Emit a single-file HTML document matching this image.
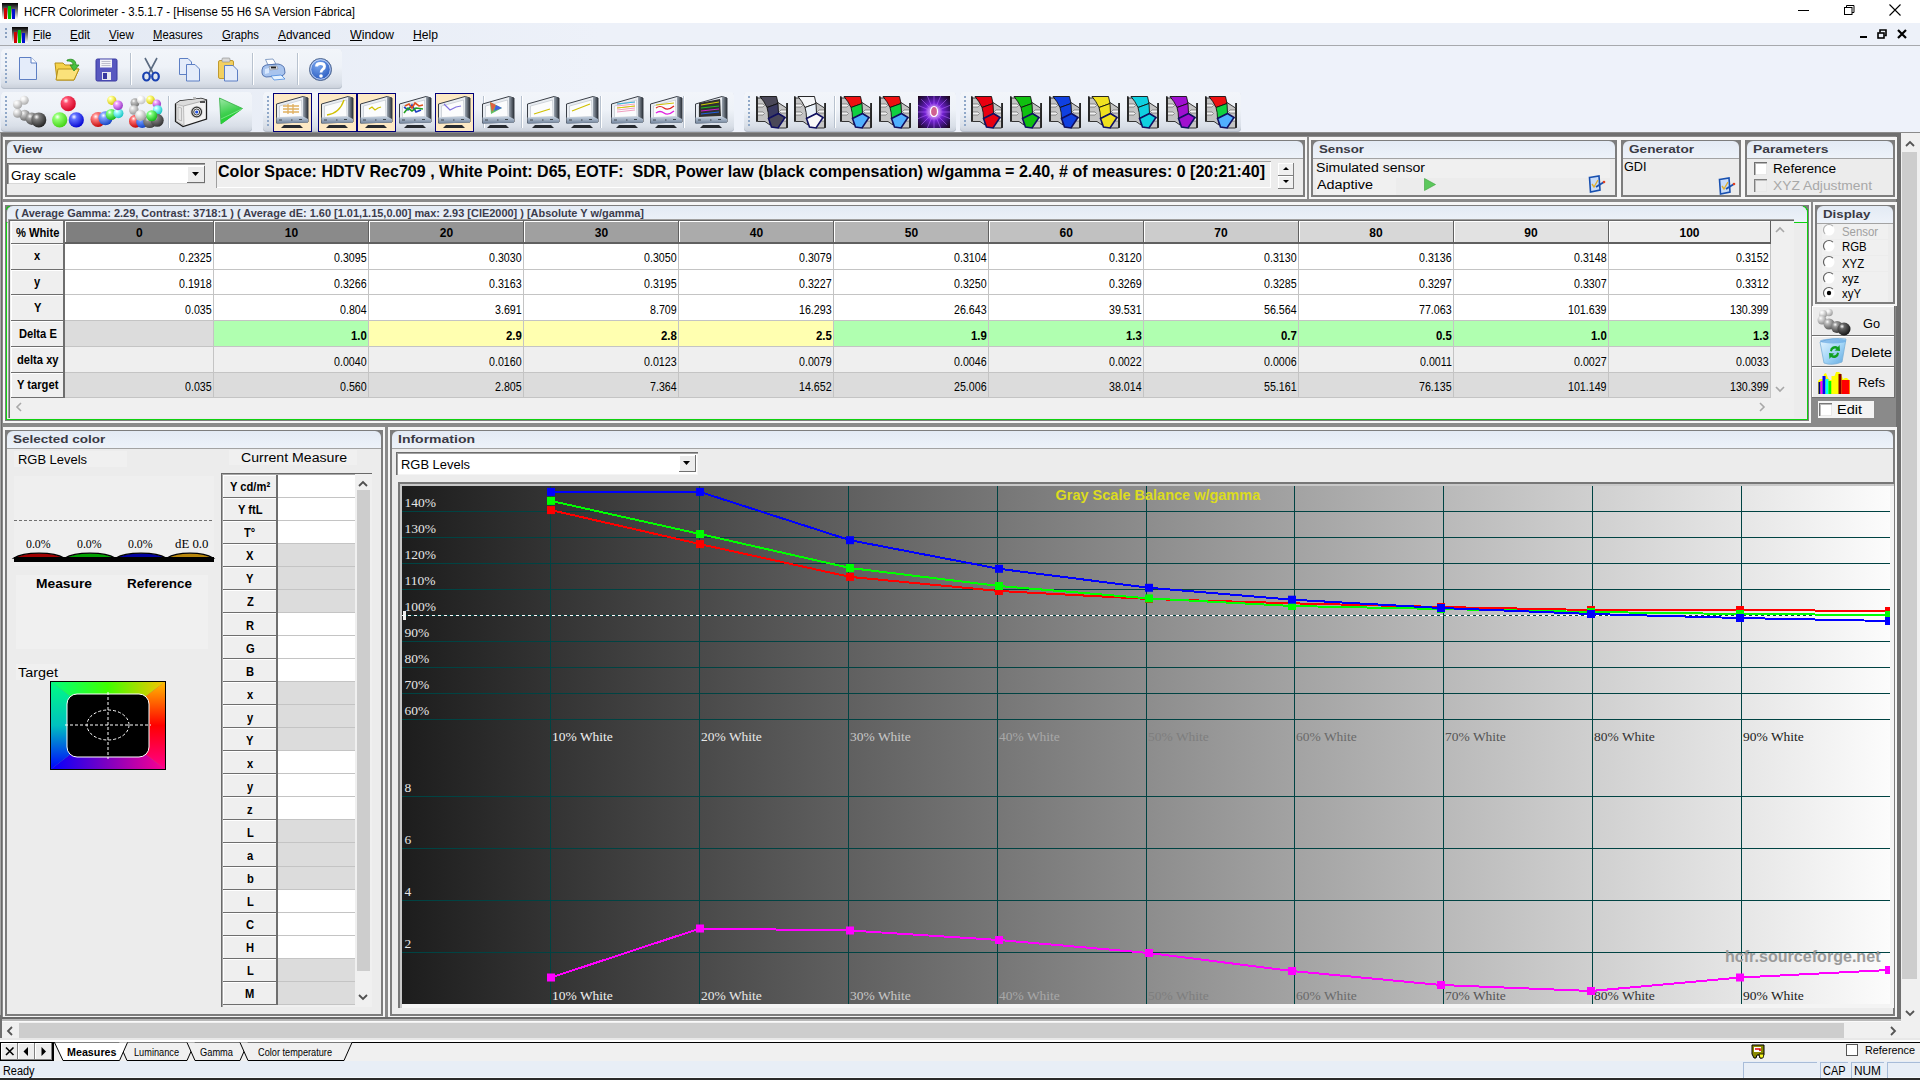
<!DOCTYPE html>
<html><head><meta charset="utf-8"><title>HCFR Colorimeter</title>
<style>
html,body{margin:0;padding:0;width:1920px;height:1080px;overflow:hidden;background:#f0f0f0;position:relative}
.b{position:absolute;box-sizing:border-box}
.t{position:absolute;white-space:pre;margin:0;padding:0}
svg.b{overflow:visible}
</style></head><body>
<div class="b" style="left:0px;top:0px;width:1920px;height:23px;background:#fff"></div><svg class="b" style="left:2px;top:3px" width="16" height="16" viewBox="0 0 16 16">
<defs><linearGradient id="ib" x1="0" y1="0" x2="0" y2="1"><stop offset="0" stop-color="#000"/><stop offset="1" stop-color="#fff"/></linearGradient></defs>
<rect x="0" y="0" width="16" height="16" fill="url(#ib)"/>
<rect x="2" y="5" width="3" height="11" fill="#d00000"/><rect x="6" y="3" width="3" height="13" fill="#00c000"/><rect x="10" y="6" width="3" height="10" fill="#0010d0"/></svg><div class="t" style="left:23.50px;top:5.84px;font-size:12px;line-height:12px;font-family:'Liberation Sans', sans-serif;font-weight:normal;color:#000;transform:scaleX(0.9526);transform-origin:0 0;">HCFR Colorimeter - 3.5.1.7 - [Hisense 55 H6 SA Version Fábrica]</div><div class="b" style="left:1798px;top:10px;width:11px;height:1px;background:#000"></div><svg class="b" style="left:1844px;top:5px" width="11" height="10"><rect x="0.5" y="2.5" width="7.5" height="7" fill="none" stroke="#000"/><path d="M2.5 2.5 V0.5 H10 V7.5 H8" fill="none" stroke="#000"/></svg><svg class="b" style="left:1889px;top:4px" width="12" height="12"><path d="M0.5 0.5 L11.5 11.5 M11.5 0.5 L0.5 11.5" stroke="#000" stroke-width="1.1"/></svg><div class="b" style="left:0px;top:23px;width:1920px;height:22px;background:linear-gradient(90deg,#e3e9f3 0px,#edf1f9 600px,#edf1f9 1920px)"></div><div class="b" style="left:0px;top:45px;width:1920px;height:1px;background:#a7a9ad"></div><div class="b" style="left:5px;top:28px;width:2px;height:2px;background:#8aa0c0"></div><div class="b" style="left:5px;top:32px;width:2px;height:2px;background:#8aa0c0"></div><div class="b" style="left:5px;top:36px;width:2px;height:2px;background:#8aa0c0"></div><svg class="b" style="left:12px;top:27px" width="16" height="16" viewBox="0 0 16 16">
<rect x="0" y="0" width="16" height="16" fill="url(#ib)"/>
<rect x="2" y="5" width="3" height="11" fill="#d00000"/><rect x="6" y="3" width="3" height="13" fill="#00c000"/><rect x="10" y="6" width="3" height="10" fill="#0010d0"/></svg><div class="t" style="left:33.00px;top:28.84px;font-size:12px;line-height:12px;font-family:'Liberation Sans', sans-serif;font-weight:normal;color:#000;transform:scaleX(0.9567);transform-origin:0 0;">File</div><div class="b" style="left:33px;top:40px;width:7px;height:1px;background:#000"></div><div class="t" style="left:70.00px;top:28.84px;font-size:12px;line-height:12px;font-family:'Liberation Sans', sans-serif;font-weight:normal;color:#000;transform:scaleX(0.9672);transform-origin:0 0;">Edit</div><div class="b" style="left:70px;top:40px;width:8px;height:1px;background:#000"></div><div class="t" style="left:109.00px;top:28.84px;font-size:12px;line-height:12px;font-family:'Liberation Sans', sans-serif;font-weight:normal;color:#000;transform:scaleX(0.9614);transform-origin:0 0;">View</div><div class="b" style="left:109px;top:40px;width:8px;height:1px;background:#000"></div><div class="t" style="left:153.40px;top:28.84px;font-size:12px;line-height:12px;font-family:'Liberation Sans', sans-serif;font-weight:normal;color:#000;transform:scaleX(0.9414);transform-origin:0 0;">Measures</div><div class="b" style="left:153.4px;top:40px;width:9px;height:1px;background:#000"></div><div class="t" style="left:222.00px;top:28.84px;font-size:12px;line-height:12px;font-family:'Liberation Sans', sans-serif;font-weight:normal;color:#000;transform:scaleX(0.9402);transform-origin:0 0;">Graphs</div><div class="b" style="left:222px;top:40px;width:9px;height:1px;background:#000"></div><div class="t" style="left:278.00px;top:28.84px;font-size:12px;line-height:12px;font-family:'Liberation Sans', sans-serif;font-weight:normal;color:#000;transform:scaleX(0.9855);transform-origin:0 0;">Advanced</div><div class="b" style="left:278px;top:40px;width:8px;height:1px;background:#000"></div><div class="t" style="left:350.00px;top:28.84px;font-size:12px;line-height:12px;font-family:'Liberation Sans', sans-serif;font-weight:normal;color:#000;transform:scaleX(1.0309);transform-origin:0 0;">Window</div><div class="b" style="left:350px;top:40px;width:12px;height:1px;background:#000"></div><div class="t" style="left:413.00px;top:28.84px;font-size:12px;line-height:12px;font-family:'Liberation Sans', sans-serif;font-weight:normal;color:#000;transform:scaleX(1.0129);transform-origin:0 0;">Help</div><div class="b" style="left:413px;top:40px;width:9px;height:1px;background:#000"></div><div class="b" style="left:1860px;top:36px;width:7px;height:2px;background:#000"></div><svg class="b" style="left:1877px;top:29px" width="10" height="10"><rect x="1" y="4" width="6" height="5" fill="none" stroke="#000" stroke-width="1.6"/><path d="M3 3.5 V1 H9 V6.5 H7.5" fill="none" stroke="#000" stroke-width="1.6"/></svg><svg class="b" style="left:1897px;top:29px" width="10" height="10"><path d="M1 1 L9 9 M9 1 L1 9" stroke="#000" stroke-width="2.2"/></svg><div class="b" style="left:0px;top:46px;width:1920px;height:87px;background:linear-gradient(90deg,#e6ebf4 0px,#eef2fa 600px,#eef2fa 1920px)"></div><div class="b" style="left:1px;top:49px;width:341px;height:40px;background:linear-gradient(#f2f5fa 0%,#eef2f8 45%,#d9dfe8 85%,#c8ced8 100%);border-radius:4px;box-shadow:inset 0 -1px 0 #b4bcc8;"></div><div class="b" style="left:1px;top:92px;width:251px;height:40px;background:linear-gradient(#f2f5fa 0%,#eef2f8 45%,#d9dfe8 85%,#c8ced8 100%);border-radius:4px;box-shadow:inset 0 -1px 0 #b4bcc8;"></div><div class="b" style="left:263px;top:92px;width:471px;height:40px;background:linear-gradient(#f2f5fa 0%,#eef2f8 45%,#d9dfe8 85%,#c8ced8 100%);border-radius:4px;box-shadow:inset 0 -1px 0 #b4bcc8;"></div><div class="b" style="left:744px;top:92px;width:212px;height:40px;background:linear-gradient(#f2f5fa 0%,#eef2f8 45%,#d9dfe8 85%,#c8ced8 100%);border-radius:4px;box-shadow:inset 0 -1px 0 #b4bcc8;"></div><div class="b" style="left:960px;top:92px;width:281px;height:40px;background:linear-gradient(#f2f5fa 0%,#eef2f8 45%,#d9dfe8 85%,#c8ced8 100%);border-radius:4px;box-shadow:inset 0 -1px 0 #b4bcc8;"></div><div class="b" style="left:5px;top:53px;width:2px;height:2px;background:#90a8c8"></div><div class="b" style="left:5px;top:57px;width:2px;height:2px;background:#90a8c8"></div><div class="b" style="left:5px;top:61px;width:2px;height:2px;background:#90a8c8"></div><div class="b" style="left:5px;top:65px;width:2px;height:2px;background:#90a8c8"></div><div class="b" style="left:5px;top:69px;width:2px;height:2px;background:#90a8c8"></div><div class="b" style="left:5px;top:73px;width:2px;height:2px;background:#90a8c8"></div><div class="b" style="left:5px;top:77px;width:2px;height:2px;background:#90a8c8"></div><div class="b" style="left:5px;top:81px;width:2px;height:2px;background:#90a8c8"></div><div class="b" style="left:5px;top:96px;width:2px;height:2px;background:#90a8c8"></div><div class="b" style="left:5px;top:100px;width:2px;height:2px;background:#90a8c8"></div><div class="b" style="left:5px;top:104px;width:2px;height:2px;background:#90a8c8"></div><div class="b" style="left:5px;top:108px;width:2px;height:2px;background:#90a8c8"></div><div class="b" style="left:5px;top:112px;width:2px;height:2px;background:#90a8c8"></div><div class="b" style="left:5px;top:116px;width:2px;height:2px;background:#90a8c8"></div><div class="b" style="left:5px;top:120px;width:2px;height:2px;background:#90a8c8"></div><div class="b" style="left:5px;top:124px;width:2px;height:2px;background:#90a8c8"></div><div class="b" style="left:267px;top:96px;width:2px;height:2px;background:#90a8c8"></div><div class="b" style="left:267px;top:100px;width:2px;height:2px;background:#90a8c8"></div><div class="b" style="left:267px;top:104px;width:2px;height:2px;background:#90a8c8"></div><div class="b" style="left:267px;top:108px;width:2px;height:2px;background:#90a8c8"></div><div class="b" style="left:267px;top:112px;width:2px;height:2px;background:#90a8c8"></div><div class="b" style="left:267px;top:116px;width:2px;height:2px;background:#90a8c8"></div><div class="b" style="left:267px;top:120px;width:2px;height:2px;background:#90a8c8"></div><div class="b" style="left:267px;top:124px;width:2px;height:2px;background:#90a8c8"></div><div class="b" style="left:748px;top:96px;width:2px;height:2px;background:#90a8c8"></div><div class="b" style="left:748px;top:100px;width:2px;height:2px;background:#90a8c8"></div><div class="b" style="left:748px;top:104px;width:2px;height:2px;background:#90a8c8"></div><div class="b" style="left:748px;top:108px;width:2px;height:2px;background:#90a8c8"></div><div class="b" style="left:748px;top:112px;width:2px;height:2px;background:#90a8c8"></div><div class="b" style="left:748px;top:116px;width:2px;height:2px;background:#90a8c8"></div><div class="b" style="left:748px;top:120px;width:2px;height:2px;background:#90a8c8"></div><div class="b" style="left:748px;top:124px;width:2px;height:2px;background:#90a8c8"></div><div class="b" style="left:964px;top:96px;width:2px;height:2px;background:#90a8c8"></div><div class="b" style="left:964px;top:100px;width:2px;height:2px;background:#90a8c8"></div><div class="b" style="left:964px;top:104px;width:2px;height:2px;background:#90a8c8"></div><div class="b" style="left:964px;top:108px;width:2px;height:2px;background:#90a8c8"></div><div class="b" style="left:964px;top:112px;width:2px;height:2px;background:#90a8c8"></div><div class="b" style="left:964px;top:116px;width:2px;height:2px;background:#90a8c8"></div><div class="b" style="left:964px;top:120px;width:2px;height:2px;background:#90a8c8"></div><div class="b" style="left:964px;top:124px;width:2px;height:2px;background:#90a8c8"></div><div class="b" style="left:130px;top:53px;width:1px;height:32px;background:#b8c2cf;box-shadow:1px 0 0 #fff"></div><div class="b" style="left:252px;top:53px;width:1px;height:32px;background:#b8c2cf;box-shadow:1px 0 0 #fff"></div><div class="b" style="left:297px;top:53px;width:1px;height:32px;background:#b8c2cf;box-shadow:1px 0 0 #fff"></div><div class="b" style="left:168px;top:96px;width:1px;height:32px;background:#b8c2cf;box-shadow:1px 0 0 #fff"></div><div class="b" style="left:483px;top:96px;width:1px;height:32px;background:#b8c2cf;box-shadow:1px 0 0 #fff"></div><div class="b" style="left:521px;top:96px;width:1px;height:32px;background:#b8c2cf;box-shadow:1px 0 0 #fff"></div><div class="b" style="left:600px;top:96px;width:1px;height:32px;background:#b8c2cf;box-shadow:1px 0 0 #fff"></div><div class="b" style="left:683px;top:96px;width:1px;height:32px;background:#b8c2cf;box-shadow:1px 0 0 #fff"></div><div class="b" style="left:834px;top:96px;width:1px;height:32px;background:#b8c2cf;box-shadow:1px 0 0 #fff"></div><div class="b" style="left:0px;top:132px;width:1920px;height:4px;background:#8b8b8b"></div><svg class="b" style="left:18px;top:56px" width="20" height="25" viewBox="0 0 20 25"><path d="M1.5 1.5 H13 L18.5 7 V23.5 H1.5Z" fill="#e4ecfa" stroke="#5d7fc4"/><path d="M13 1.5 V7 H18.5" fill="#fff" stroke="#5d7fc4"/></svg><svg class="b" style="left:54px;top:57px" width="26" height="25" viewBox="0 0 26 25"><path d="M1 6 H9 L11 8 H19 L21 12 L25 12 L20 23 H3 Z" fill="#f5d24a" stroke="#b69018"/><path d="M4 12 H25 L20 23 H2Z" fill="#fbe27a" stroke="#b69018"/><path d="M13 3 C18 1 22 3 22 8 L25 8 L20 14 L16 8 L19 8 C19 5 17 4 13 4Z" fill="#48c040" stroke="#2a8a25" stroke-width="0.8"/></svg><svg class="b" style="left:95px;top:58px" width="23" height="24" viewBox="0 0 23 24"><rect x="1" y="1" width="21" height="22" rx="1.5" fill="#5858c0" stroke="#3838a0"/><rect x="5" y="1.5" width="12" height="8" fill="#f4f4f8"/><path d="M6.5 3.5h9M6.5 5.5h9M6.5 7.5h9" stroke="#9a9ab0" stroke-width="0.6"/><rect x="7" y="14" width="9" height="8" fill="#e8e8f0"/><rect x="8" y="15" width="4" height="6" fill="#3838a0"/></svg><svg class="b" style="left:142px;top:57px" width="18" height="25" viewBox="0 0 18 25"><path d="M3 1 L11 16 M15 1 L7 16" stroke="#5a6a80" stroke-width="1.6"/><ellipse cx="4.5" cy="19.5" rx="3.3" ry="4" fill="none" stroke="#1840b0" stroke-width="2.2"/><ellipse cx="13.5" cy="19.5" rx="3.3" ry="4" fill="none" stroke="#1840b0" stroke-width="2.2"/></svg><svg class="b" style="left:178px;top:57px" width="23" height="25" viewBox="0 0 23 25"><path d="M1.5 1.5H10L13.5 5V17.5H1.5Z" fill="#e4ecfa" stroke="#5d7fc4"/><path d="M8.5 7.5H17L21.5 12V24H8.5Z" fill="#e4ecfa" stroke="#5d7fc4"/></svg><svg class="b" style="left:217px;top:57px" width="22" height="25" viewBox="0 0 22 25"><rect x="1.5" y="3.5" width="15" height="18" rx="1.5" fill="#f2d060" stroke="#c09a30"/><rect x="5" y="1" width="8" height="4" rx="1" fill="#d8d8d8" stroke="#888" stroke-width="0.6"/><path d="M7.5 8.5H16L20.5 13V24H7.5Z" fill="#e4ecfa" stroke="#5d7fc4"/></svg><svg class="b" style="left:261px;top:58px" width="25" height="23" viewBox="0 0 25 23"><path d="M4.5 1.5 L12 1 L15 6 L7 7Z" fill="#fff" stroke="#6a88b8" stroke-width="0.8"/><path d="M1 12 Q1 8 5 7 L17 6 Q23 7 23.5 11 L24 15 Q23 18 19 18 L5 19 Q1 18 1 15Z" fill="#a8c4ee" stroke="#4a6aa8" stroke-width="0.9"/><path d="M8 8.5 L16 8 L17 11 L9 12Z" fill="#d8dce4" stroke="#888" stroke-width="0.5"/><rect x="10" y="8.6" width="5" height="1.8" fill="#202020"/><path d="M4 11 L8 10 L8 15 L4 16Z" fill="#d8e8ff"/><path d="M10 18 L20 17 L24 21 L13 22Z" fill="#e8f4ff" stroke="#4a8ae0" stroke-width="0.8"/></svg><svg class="b" style="left:308px;top:57px" width="25" height="25" viewBox="0 0 25 25"><defs><radialGradient id="hg" cx="0.4" cy="0.3" r="0.8"><stop offset="0" stop-color="#7aa8f0"/><stop offset="1" stop-color="#1e50b8"/></radialGradient></defs><circle cx="12.5" cy="12.5" r="11" fill="url(#hg)" stroke="#5a6e90" stroke-width="1"/><circle cx="12.5" cy="12.5" r="9.8" fill="none" stroke="#e8f0ff" stroke-width="0.8"/><path d="M8.5 9.5 C8.5 5.5 16.5 5.5 16.5 9.5 C16.5 12.5 13 12 13 15.5" fill="none" stroke="#fff" stroke-width="2.8"/><circle cx="13" cy="19" r="1.8" fill="#fff"/></svg><svg class="b" style="left:13px;top:96px" width="34" height="33" viewBox="0 0 34 33"><defs><radialGradient id="bg0" cx="0.35" cy="0.3" r="0.75"><stop offset="0" stop-color="#fff"/><stop offset="0.25" stop-color="#f4f4f4"/><stop offset="1" stop-color="#a8a8a8"/></radialGradient></defs><circle cx="11.25" cy="4.3" r="4.5" fill="url(#bg0)"/><defs><radialGradient id="bg1" cx="0.35" cy="0.3" r="0.75"><stop offset="0" stop-color="#fff"/><stop offset="0.25" stop-color="#f0f0f0"/><stop offset="1" stop-color="#a0a0a0"/></radialGradient></defs><circle cx="4.6" cy="8.5" r="4.6" fill="url(#bg1)"/><defs><radialGradient id="bg2" cx="0.35" cy="0.3" r="0.75"><stop offset="0" stop-color="#fff"/><stop offset="0.25" stop-color="#c8c8c8"/><stop offset="1" stop-color="#606060"/></radialGradient></defs><circle cx="11.7" cy="19.3" r="5.5" fill="url(#bg2)"/><defs><radialGradient id="bg3" cx="0.35" cy="0.3" r="0.75"><stop offset="0" stop-color="#fff"/><stop offset="0.25" stop-color="#e8e8e8"/><stop offset="1" stop-color="#909090"/></radialGradient></defs><circle cx="4.6" cy="17.25" r="4.6" fill="url(#bg3)"/><defs><radialGradient id="bg4" cx="0.35" cy="0.3" r="0.75"><stop offset="0" stop-color="#fff"/><stop offset="0.25" stop-color="#a8a8a8"/><stop offset="1" stop-color="#404040"/></radialGradient></defs><circle cx="18.75" cy="22.7" r="6.2" fill="url(#bg4)"/><defs><radialGradient id="bg5" cx="0.35" cy="0.3" r="0.75"><stop offset="0" stop-color="#fff"/><stop offset="0.25" stop-color="#808080"/><stop offset="1" stop-color="#202020"/></radialGradient></defs><circle cx="25.8" cy="23.9" r="7.5" fill="url(#bg5)"/></svg><svg class="b" style="left:52px;top:96px" width="33" height="33" viewBox="0 0 33 33"><defs><radialGradient id="br" cx="0.35" cy="0.3" r="0.75"><stop offset="0" stop-color="#fff"/><stop offset="0.25" stop-color="#ff5070"/><stop offset="1" stop-color="#d00020"/></radialGradient></defs><circle cx="16.2" cy="7.7" r="7.6" fill="url(#br)"/><defs><radialGradient id="bg" cx="0.35" cy="0.3" r="0.75"><stop offset="0" stop-color="#fff"/><stop offset="0.25" stop-color="#90ff70"/><stop offset="1" stop-color="#40d010"/></radialGradient></defs><circle cx="7.7" cy="23.9" r="7.6" fill="url(#bg)"/><defs><radialGradient id="bb" cx="0.35" cy="0.3" r="0.75"><stop offset="0" stop-color="#fff"/><stop offset="0.25" stop-color="#6070ff"/><stop offset="1" stop-color="#0000d0"/></radialGradient></defs><circle cx="24.3" cy="23.9" r="7.6" fill="url(#bb)"/></svg><svg class="b" style="left:91px;top:96px" width="34" height="33" viewBox="0 0 34 33"><defs><radialGradient id="bm0" cx="0.35" cy="0.3" r="0.75"><stop offset="0" stop-color="#fff"/><stop offset="0.25" stop-color="#ff8080"/><stop offset="1" stop-color="#c00000"/></radialGradient></defs><circle cx="7" cy="23.5" r="7.5" fill="url(#bm0)"/><defs><radialGradient id="bm1" cx="0.35" cy="0.3" r="0.75"><stop offset="0" stop-color="#fff"/><stop offset="0.25" stop-color="#80a0ff"/><stop offset="1" stop-color="#1040c0"/></radialGradient></defs><circle cx="14.5" cy="22.25" r="7" fill="url(#bm1)"/><defs><radialGradient id="bm2" cx="0.35" cy="0.3" r="0.75"><stop offset="0" stop-color="#fff"/><stop offset="0.25" stop-color="#80ff80"/><stop offset="1" stop-color="#10b010"/></radialGradient></defs><circle cx="20.3" cy="18.5" r="5.6" fill="url(#bm2)"/><defs><radialGradient id="bm3" cx="0.35" cy="0.3" r="0.75"><stop offset="0" stop-color="#fff"/><stop offset="0.25" stop-color="#a0ffff"/><stop offset="1" stop-color="#10c0c0"/></radialGradient></defs><circle cx="27.4" cy="17.25" r="5" fill="url(#bm3)"/><defs><radialGradient id="bm4" cx="0.35" cy="0.3" r="0.75"><stop offset="0" stop-color="#fff"/><stop offset="0.25" stop-color="#ffff90"/><stop offset="1" stop-color="#d0c000"/></radialGradient></defs><circle cx="20.75" cy="4.3" r="4.6" fill="url(#bm4)"/><defs><radialGradient id="bm5" cx="0.35" cy="0.3" r="0.75"><stop offset="0" stop-color="#fff"/><stop offset="0.25" stop-color="#f0a0ff"/><stop offset="1" stop-color="#9030c0"/></radialGradient></defs><circle cx="27" cy="9.3" r="4.9" fill="url(#bm5)"/></svg><svg class="b" style="left:130px;top:96px" width="34" height="33" viewBox="0 0 34 33"><defs><radialGradient id="b80" cx="0.35" cy="0.3" r="0.75"><stop offset="0" stop-color="#fff"/><stop offset="0.25" stop-color="#c0c0c0"/><stop offset="1" stop-color="#707070"/></radialGradient></defs><circle cx="5" cy="6.8" r="4.5" fill="url(#b80)"/><defs><radialGradient id="b81" cx="0.35" cy="0.3" r="0.75"><stop offset="0" stop-color="#fff"/><stop offset="0.25" stop-color="#ffffff"/><stop offset="1" stop-color="#c0c0c0"/></radialGradient></defs><circle cx="11.3" cy="3.9" r="4.3" fill="url(#b81)"/><defs><radialGradient id="b82" cx="0.35" cy="0.3" r="0.75"><stop offset="0" stop-color="#fff"/><stop offset="0.25" stop-color="#ffff80"/><stop offset="1" stop-color="#d0c000"/></radialGradient></defs><circle cx="20.5" cy="3.9" r="4.3" fill="url(#b82)"/><defs><radialGradient id="b83" cx="0.35" cy="0.3" r="0.75"><stop offset="0" stop-color="#fff"/><stop offset="0.25" stop-color="#f0a0ff"/><stop offset="1" stop-color="#9030c0"/></radialGradient></defs><circle cx="26.75" cy="7.7" r="4.3" fill="url(#b83)"/><defs><radialGradient id="b84" cx="0.35" cy="0.3" r="0.75"><stop offset="0" stop-color="#fff"/><stop offset="0.25" stop-color="#a0ffff"/><stop offset="1" stop-color="#10c0c0"/></radialGradient></defs><circle cx="27.6" cy="14" r="4.8" fill="url(#b84)"/><defs><radialGradient id="b85" cx="0.35" cy="0.3" r="0.75"><stop offset="0" stop-color="#fff"/><stop offset="0.25" stop-color="#e0e0e0"/><stop offset="1" stop-color="#909090"/></radialGradient></defs><circle cx="3.8" cy="14" r="4.8" fill="url(#b85)"/><defs><radialGradient id="b86" cx="0.35" cy="0.3" r="0.75"><stop offset="0" stop-color="#fff"/><stop offset="0.25" stop-color="#ff7070"/><stop offset="1" stop-color="#c00000"/></radialGradient></defs><circle cx="5.5" cy="25.2" r="6.5" fill="url(#b86)"/><defs><radialGradient id="b87" cx="0.35" cy="0.3" r="0.75"><stop offset="0" stop-color="#fff"/><stop offset="0.25" stop-color="#6090ff"/><stop offset="1" stop-color="#1040c0"/></radialGradient></defs><circle cx="12.2" cy="26" r="6" fill="url(#b87)"/><defs><radialGradient id="b88" cx="0.35" cy="0.3" r="0.75"><stop offset="0" stop-color="#fff"/><stop offset="0.25" stop-color="#909090"/><stop offset="1" stop-color="#404040"/></radialGradient></defs><circle cx="19.7" cy="25.6" r="6.5" fill="url(#b88)"/><defs><radialGradient id="b89" cx="0.35" cy="0.3" r="0.75"><stop offset="0" stop-color="#fff"/><stop offset="0.25" stop-color="#808080"/><stop offset="1" stop-color="#303030"/></radialGradient></defs><circle cx="27.2" cy="24.3" r="6.5" fill="url(#b89)"/><defs><radialGradient id="b810" cx="0.35" cy="0.3" r="0.75"><stop offset="0" stop-color="#fff"/><stop offset="0.25" stop-color="#80ff80"/><stop offset="1" stop-color="#10b010"/></radialGradient></defs><circle cx="21.75" cy="19.75" r="5.5" fill="url(#b810)"/><defs><radialGradient id="b811" cx="0.35" cy="0.3" r="0.75"><stop offset="0" stop-color="#fff"/><stop offset="0.25" stop-color="#f0f0f0"/><stop offset="1" stop-color="#a0a0a0"/></radialGradient></defs><circle cx="10.5" cy="19.3" r="5.5" fill="url(#b811)"/></svg><svg class="b" style="left:174px;top:96px" width="34" height="32" viewBox="0 0 34 32"><path d="M1.5 8 L6 5 L20 3.5 L27 2.5 L32.5 4 L32.5 23 L9 30.5 L1.5 25.5 Z" fill="#f2f2f2" stroke="#1e1e1e" stroke-width="1.3"/><path d="M6 5 L27 2.5 L32 4 L9.5 10 L1.5 8Z" fill="#dcdcdc"/><path d="M2.5 8.5 L9.5 10 L10 29.5 L2.5 25Z" fill="#e6e6e6" stroke="#a0a0a0" stroke-width="0.6"/><path d="M4 11 L7.5 12 L7.5 25 L4 23.5Z" fill="none" stroke="#b0b0b0" stroke-width="0.8"/><path d="M9.5 10 L32.5 4" stroke="#888" stroke-width="0.6"/><circle cx="22.7" cy="16" r="6.3" fill="#dadada"/><circle cx="22.7" cy="16" r="4.8" fill="#f4f4f4" stroke="#303030" stroke-width="1.3"/><circle cx="22.7" cy="16" r="3" fill="none" stroke="#404040" stroke-width="1"/><circle cx="22.7" cy="16" r="1.6" fill="#2050e0"/><rect x="26" y="5" width="5" height="2" fill="#505050"/><rect x="19" y="1" width="3" height="1.8" fill="#bbb"/></svg><svg class="b" style="left:218px;top:96px" width="27" height="32" viewBox="0 0 27 32"><defs><linearGradient id="pg" x1="0" y1="0" x2="0.3" y2="1"><stop offset="0" stop-color="#a0e8a8"/><stop offset="0.6" stop-color="#40d050"/><stop offset="1" stop-color="#20c030"/></linearGradient></defs><path d="M1.5 2 L24.5 12.5 L3 28 Z" fill="url(#pg)" stroke="#30b040" stroke-width="0.8"/><path d="M3 23 L24 13 L3 28Z" fill="#28d038"/><path d="M3 23 L24 13" stroke="#a8f0b0" stroke-width="0.6"/></svg><div class="b" style="left:273px;top:93px;width:39px;height:39px;background:#fde9c4;box-shadow:inset 0 0 0 1px #00007a;"></div><svg class="b" style="left:276px;top:95px" width="33" height="34" viewBox="0 0 33 34">
<defs><linearGradient id="mg276" x1="0" y1="0" x2="0" y2="1"><stop offset="0" stop-color="#c8d4e2"/><stop offset="1" stop-color="#6f8199"/></linearGradient>
<linearGradient id="ms276" x1="0" y1="0" x2="1" y2="0"><stop offset="0" stop-color="#9aa4b0"/><stop offset="1" stop-color="#2a3038"/></linearGradient></defs>
<path d="M0.5 9 L27 1.5 L32 3 L32 27 L0.5 28 Z" fill="#e9edf2" stroke="#3a3f47" stroke-width="1"/>
<path d="M27 1.5 L32 3 L32 27 L27 24Z" fill="url(#ms276)"/>
<path d="M3.5 11 L25.5 5 L26 21.5 L3.5 22.5 Z" fill="#fbfcfd" stroke="#b8c0c8" stroke-width="0.6"/>
<path d="M0.5 22.5 L27 21.5 L32 24 L32 27.5 L0.5 28.5 Z" fill="url(#mg276)"/>
<path d="M3 25 h3 M15 25 h1.5 M23 24.5 h3" stroke="#404850" stroke-width="1.2"/>
<path d="M8 30 L24 30 L27 33 L5 33 Z" fill="#262a30"/>
<path d="M7 11h16M7 14h16M7 17h16M12 9v10M17 9v10" stroke="#e0b060" stroke-width="1.3"/>
</svg><div class="b" style="left:318px;top:93px;width:39px;height:39px;background:#fde9c4;box-shadow:inset 0 0 0 1px #00007a;"></div><svg class="b" style="left:321px;top:95px" width="33" height="34" viewBox="0 0 33 34">
<defs><linearGradient id="mg321" x1="0" y1="0" x2="0" y2="1"><stop offset="0" stop-color="#c8d4e2"/><stop offset="1" stop-color="#6f8199"/></linearGradient>
<linearGradient id="ms321" x1="0" y1="0" x2="1" y2="0"><stop offset="0" stop-color="#9aa4b0"/><stop offset="1" stop-color="#2a3038"/></linearGradient></defs>
<path d="M0.5 9 L27 1.5 L32 3 L32 27 L0.5 28 Z" fill="#e9edf2" stroke="#3a3f47" stroke-width="1"/>
<path d="M27 1.5 L32 3 L32 27 L27 24Z" fill="url(#ms321)"/>
<path d="M3.5 11 L25.5 5 L26 21.5 L3.5 22.5 Z" fill="#fbfcfd" stroke="#b8c0c8" stroke-width="0.6"/>
<path d="M0.5 22.5 L27 21.5 L32 24 L32 27.5 L0.5 28.5 Z" fill="url(#mg321)"/>
<path d="M3 25 h3 M15 25 h1.5 M23 24.5 h3" stroke="#404850" stroke-width="1.2"/>
<path d="M8 30 L24 30 L27 33 L5 33 Z" fill="#262a30"/>
<path d="M6 20 C14 19 20 14 23 5" fill="none" stroke="#d0c000" stroke-width="1.3"/>
</svg><div class="b" style="left:357px;top:93px;width:39px;height:39px;background:#fde9c4;box-shadow:inset 0 0 0 1px #00007a;"></div><svg class="b" style="left:360px;top:95px" width="33" height="34" viewBox="0 0 33 34">
<defs><linearGradient id="mg360" x1="0" y1="0" x2="0" y2="1"><stop offset="0" stop-color="#c8d4e2"/><stop offset="1" stop-color="#6f8199"/></linearGradient>
<linearGradient id="ms360" x1="0" y1="0" x2="1" y2="0"><stop offset="0" stop-color="#9aa4b0"/><stop offset="1" stop-color="#2a3038"/></linearGradient></defs>
<path d="M0.5 9 L27 1.5 L32 3 L32 27 L0.5 28 Z" fill="#e9edf2" stroke="#3a3f47" stroke-width="1"/>
<path d="M27 1.5 L32 3 L32 27 L27 24Z" fill="url(#ms360)"/>
<path d="M3.5 11 L25.5 5 L26 21.5 L3.5 22.5 Z" fill="#fbfcfd" stroke="#b8c0c8" stroke-width="0.6"/>
<path d="M0.5 22.5 L27 21.5 L32 24 L32 27.5 L0.5 28.5 Z" fill="url(#mg360)"/>
<path d="M3 25 h3 M15 25 h1.5 M23 24.5 h3" stroke="#404850" stroke-width="1.2"/>
<path d="M8 30 L24 30 L27 33 L5 33 Z" fill="#262a30"/>
<path d="M9 14 L12 12 L15 15 L18 13 L21 12" fill="none" stroke="#d0c000" stroke-width="1.3"/>
</svg><svg class="b" style="left:399px;top:95px" width="33" height="34" viewBox="0 0 33 34">
<defs><linearGradient id="mg399" x1="0" y1="0" x2="0" y2="1"><stop offset="0" stop-color="#c8d4e2"/><stop offset="1" stop-color="#6f8199"/></linearGradient>
<linearGradient id="ms399" x1="0" y1="0" x2="1" y2="0"><stop offset="0" stop-color="#9aa4b0"/><stop offset="1" stop-color="#2a3038"/></linearGradient></defs>
<path d="M0.5 9 L27 1.5 L32 3 L32 27 L0.5 28 Z" fill="#e9edf2" stroke="#3a3f47" stroke-width="1"/>
<path d="M27 1.5 L32 3 L32 27 L27 24Z" fill="url(#ms399)"/>
<path d="M3.5 11 L25.5 5 L26 21.5 L3.5 22.5 Z" fill="#fbfcfd" stroke="#b8c0c8" stroke-width="0.6"/>
<path d="M0.5 22.5 L27 21.5 L32 24 L32 27.5 L0.5 28.5 Z" fill="url(#mg399)"/>
<path d="M3 25 h3 M15 25 h1.5 M23 24.5 h3" stroke="#404850" stroke-width="1.2"/>
<path d="M8 30 L24 30 L27 33 L5 33 Z" fill="#262a30"/>
<path d="M5 12 L9 15 L13 10 L17 17 L22 15" fill="none" stroke="#2040c0" stroke-width="1.6"/><path d="M5 18 L9 13 L13 16 L17 13 L24 14" fill="none" stroke="#20a020" stroke-width="1.6"/><path d="M6 11 L10 9 L13 13 L16 8 L20 11 L24 10" fill="none" stroke="#e05020" stroke-width="1.6"/>
</svg><div class="b" style="left:435px;top:93px;width:39px;height:39px;background:#fde9c4;box-shadow:inset 0 0 0 1px #00007a;"></div><svg class="b" style="left:438px;top:95px" width="33" height="34" viewBox="0 0 33 34">
<defs><linearGradient id="mg438" x1="0" y1="0" x2="0" y2="1"><stop offset="0" stop-color="#c8d4e2"/><stop offset="1" stop-color="#6f8199"/></linearGradient>
<linearGradient id="ms438" x1="0" y1="0" x2="1" y2="0"><stop offset="0" stop-color="#9aa4b0"/><stop offset="1" stop-color="#2a3038"/></linearGradient></defs>
<path d="M0.5 9 L27 1.5 L32 3 L32 27 L0.5 28 Z" fill="#e9edf2" stroke="#3a3f47" stroke-width="1"/>
<path d="M27 1.5 L32 3 L32 27 L27 24Z" fill="url(#ms438)"/>
<path d="M3.5 11 L25.5 5 L26 21.5 L3.5 22.5 Z" fill="#fbfcfd" stroke="#b8c0c8" stroke-width="0.6"/>
<path d="M0.5 22.5 L27 21.5 L32 24 L32 27.5 L0.5 28.5 Z" fill="url(#mg438)"/>
<path d="M3 25 h3 M15 25 h1.5 M23 24.5 h3" stroke="#404850" stroke-width="1.2"/>
<path d="M8 30 L24 30 L27 33 L5 33 Z" fill="#262a30"/>
<path d="M6 9 L12 15 L18 12 L23 11" fill="none" stroke="#8070e0" stroke-width="1.1"/>
</svg><svg class="b" style="left:482px;top:95px" width="33" height="34" viewBox="0 0 33 34">
<defs><linearGradient id="mg482" x1="0" y1="0" x2="0" y2="1"><stop offset="0" stop-color="#c8d4e2"/><stop offset="1" stop-color="#6f8199"/></linearGradient>
<linearGradient id="ms482" x1="0" y1="0" x2="1" y2="0"><stop offset="0" stop-color="#9aa4b0"/><stop offset="1" stop-color="#2a3038"/></linearGradient></defs>
<path d="M0.5 9 L27 1.5 L32 3 L32 27 L0.5 28 Z" fill="#e9edf2" stroke="#3a3f47" stroke-width="1"/>
<path d="M27 1.5 L32 3 L32 27 L27 24Z" fill="url(#ms482)"/>
<path d="M3.5 11 L25.5 5 L26 21.5 L3.5 22.5 Z" fill="#fbfcfd" stroke="#b8c0c8" stroke-width="0.6"/>
<path d="M0.5 22.5 L27 21.5 L32 24 L32 27.5 L0.5 28.5 Z" fill="url(#mg482)"/>
<path d="M3 25 h3 M15 25 h1.5 M23 24.5 h3" stroke="#404850" stroke-width="1.2"/>
<path d="M8 30 L24 30 L27 33 L5 33 Z" fill="#262a30"/>
<path d="M8 7 L20 13 L9 19Z" fill="#60c060"/><path d="M8 7 L14 10 L10 17Z" fill="#e06040"/><path d="M14 10 L20 13 L12 16Z" fill="#4060e0"/>
</svg><svg class="b" style="left:527px;top:95px" width="33" height="34" viewBox="0 0 33 34">
<defs><linearGradient id="mg527" x1="0" y1="0" x2="0" y2="1"><stop offset="0" stop-color="#c8d4e2"/><stop offset="1" stop-color="#6f8199"/></linearGradient>
<linearGradient id="ms527" x1="0" y1="0" x2="1" y2="0"><stop offset="0" stop-color="#9aa4b0"/><stop offset="1" stop-color="#2a3038"/></linearGradient></defs>
<path d="M0.5 9 L27 1.5 L32 3 L32 27 L0.5 28 Z" fill="#e9edf2" stroke="#3a3f47" stroke-width="1"/>
<path d="M27 1.5 L32 3 L32 27 L27 24Z" fill="url(#ms527)"/>
<path d="M3.5 11 L25.5 5 L26 21.5 L3.5 22.5 Z" fill="#fbfcfd" stroke="#b8c0c8" stroke-width="0.6"/>
<path d="M0.5 22.5 L27 21.5 L32 24 L32 27.5 L0.5 28.5 Z" fill="url(#mg527)"/>
<path d="M3 25 h3 M15 25 h1.5 M23 24.5 h3" stroke="#404850" stroke-width="1.2"/>
<path d="M8 30 L24 30 L27 33 L5 33 Z" fill="#262a30"/>
<path d="M7 19 L23 14" stroke="#d0c000" stroke-width="1.2"/>
</svg><svg class="b" style="left:566px;top:95px" width="33" height="34" viewBox="0 0 33 34">
<defs><linearGradient id="mg566" x1="0" y1="0" x2="0" y2="1"><stop offset="0" stop-color="#c8d4e2"/><stop offset="1" stop-color="#6f8199"/></linearGradient>
<linearGradient id="ms566" x1="0" y1="0" x2="1" y2="0"><stop offset="0" stop-color="#9aa4b0"/><stop offset="1" stop-color="#2a3038"/></linearGradient></defs>
<path d="M0.5 9 L27 1.5 L32 3 L32 27 L0.5 28 Z" fill="#e9edf2" stroke="#3a3f47" stroke-width="1"/>
<path d="M27 1.5 L32 3 L32 27 L27 24Z" fill="url(#ms566)"/>
<path d="M3.5 11 L25.5 5 L26 21.5 L3.5 22.5 Z" fill="#fbfcfd" stroke="#b8c0c8" stroke-width="0.6"/>
<path d="M0.5 22.5 L27 21.5 L32 24 L32 27.5 L0.5 28.5 Z" fill="url(#mg566)"/>
<path d="M3 25 h3 M15 25 h1.5 M23 24.5 h3" stroke="#404850" stroke-width="1.2"/>
<path d="M8 30 L24 30 L27 33 L5 33 Z" fill="#262a30"/>
<path d="M6 16 L24 9" stroke="#d0c000" stroke-width="1.2"/>
</svg><svg class="b" style="left:611px;top:95px" width="33" height="34" viewBox="0 0 33 34">
<defs><linearGradient id="mg611" x1="0" y1="0" x2="0" y2="1"><stop offset="0" stop-color="#c8d4e2"/><stop offset="1" stop-color="#6f8199"/></linearGradient>
<linearGradient id="ms611" x1="0" y1="0" x2="1" y2="0"><stop offset="0" stop-color="#9aa4b0"/><stop offset="1" stop-color="#2a3038"/></linearGradient></defs>
<path d="M0.5 9 L27 1.5 L32 3 L32 27 L0.5 28 Z" fill="#e9edf2" stroke="#3a3f47" stroke-width="1"/>
<path d="M27 1.5 L32 3 L32 27 L27 24Z" fill="url(#ms611)"/>
<path d="M3.5 11 L25.5 5 L26 21.5 L3.5 22.5 Z" fill="#fbfcfd" stroke="#b8c0c8" stroke-width="0.6"/>
<path d="M0.5 22.5 L27 21.5 L32 24 L32 27.5 L0.5 28.5 Z" fill="url(#mg611)"/>
<path d="M3 25 h3 M15 25 h1.5 M23 24.5 h3" stroke="#404850" stroke-width="1.2"/>
<path d="M8 30 L24 30 L27 33 L5 33 Z" fill="#262a30"/>
<path d="M6 9 L24 7M6 11 L24 9M6 13L24 11M6 15L24 13M6 17L24 15" stroke="#f0a0c0" stroke-width="1"/><path d="M6 9 L24 7" stroke="#30c0e0"/><path d="M6 13 L24 11" stroke="#d0d000"/>
</svg><svg class="b" style="left:650px;top:95px" width="33" height="34" viewBox="0 0 33 34">
<defs><linearGradient id="mg650" x1="0" y1="0" x2="0" y2="1"><stop offset="0" stop-color="#c8d4e2"/><stop offset="1" stop-color="#6f8199"/></linearGradient>
<linearGradient id="ms650" x1="0" y1="0" x2="1" y2="0"><stop offset="0" stop-color="#9aa4b0"/><stop offset="1" stop-color="#2a3038"/></linearGradient></defs>
<path d="M0.5 9 L27 1.5 L32 3 L32 27 L0.5 28 Z" fill="#e9edf2" stroke="#3a3f47" stroke-width="1"/>
<path d="M27 1.5 L32 3 L32 27 L27 24Z" fill="url(#ms650)"/>
<path d="M3.5 11 L25.5 5 L26 21.5 L3.5 22.5 Z" fill="#fbfcfd" stroke="#b8c0c8" stroke-width="0.6"/>
<path d="M0.5 22.5 L27 21.5 L32 24 L32 27.5 L0.5 28.5 Z" fill="url(#mg650)"/>
<path d="M3 25 h3 M15 25 h1.5 M23 24.5 h3" stroke="#404850" stroke-width="1.2"/>
<path d="M8 30 L24 30 L27 33 L5 33 Z" fill="#262a30"/>
<path d="M6 10 L24 8" stroke="#d0c000"/><path d="M6 13 Q10 10 14 13 T24 11" fill="none" stroke="#e02020" stroke-width="1.2"/><path d="M6 18 Q10 15 14 18 T24 16" fill="none" stroke="#e020e0" stroke-width="1.4"/>
</svg><svg class="b" style="left:695px;top:95px" width="33" height="34" viewBox="0 0 33 34">
<defs><linearGradient id="mg695" x1="0" y1="0" x2="0" y2="1"><stop offset="0" stop-color="#c8d4e2"/><stop offset="1" stop-color="#6f8199"/></linearGradient>
<linearGradient id="ms695" x1="0" y1="0" x2="1" y2="0"><stop offset="0" stop-color="#9aa4b0"/><stop offset="1" stop-color="#2a3038"/></linearGradient></defs>
<path d="M0.5 9 L27 1.5 L32 3 L32 27 L0.5 28 Z" fill="#e9edf2" stroke="#3a3f47" stroke-width="1"/>
<path d="M27 1.5 L32 3 L32 27 L27 24Z" fill="url(#ms695)"/>
<path d="M3.5 11 L25.5 5 L26 21.5 L3.5 22.5 Z" fill="#fbfcfd" stroke="#b8c0c8" stroke-width="0.6"/>
<path d="M0.5 22.5 L27 21.5 L32 24 L32 27.5 L0.5 28.5 Z" fill="url(#mg695)"/>
<path d="M3 25 h3 M15 25 h1.5 M23 24.5 h3" stroke="#404850" stroke-width="1.2"/>
<path d="M8 30 L24 30 L27 33 L5 33 Z" fill="#262a30"/>
<path d="M4 8 L25 4 L26 21 L4 22 Z" fill="#303030"/><path d="M6 10 L24 7" stroke="#d0d000"/><path d="M6 13 L24 11" stroke="#20c020"/><path d="M6 16 L24 14" stroke="#d020d0"/><path d="M6 19 L24 17" stroke="#2060e0"/>
</svg><svg class="b" style="left:756px;top:96px" width="32" height="32" viewBox="0 0 32 32"><path d="M1 0.5 V25.5" stroke="#111" stroke-width="1.6"/>
<path d="M0 1 H1 M0 3 H1 M0 5 H1 M0 7 H1 M0 9 H1 M0 11 H1 M0 13 H1 M0 15 H1 M0 17 H1 M0 19 H1 M0 21 H1 M0 23 H1 M0 25 H1" stroke="#111" stroke-width="1"/>
<path d="M31 7 V32" stroke="#111" stroke-width="1.6"/>
<path d="M31 8 H32 M31 10 H32 M31 12 H32 M31 14 H32 M31 16 H32 M31 18 H32 M31 20 H32 M31 22 H32 M31 24 H32 M31 26 H32 M31 28 H32 M31 30 H32" stroke="#111" stroke-width="1"/>
<path d="M1.5 2 H7 L14 6 V29 L9 25.5 H1.5 Z" fill="#c4c4c4" stroke="#222" stroke-width="0.9"/>
<path d="M2 8 H7 Q10 9.5 7 11 H2 M2 16 H7 Q10 17.5 7 19 H2" fill="#f0f0f0" stroke="#555" stroke-width="0.6"/>
<path d="M17 6.5 H22 L30.5 12 V32 H22 L17 27 Z" fill="#c4c4c4" stroke="#222" stroke-width="0.9"/>
<path d="M30 14 H25 Q22 15.5 25 17 H30 M30 22 H25 Q22 23.5 25 25 H30" fill="#f0f0f0" stroke="#555" stroke-width="0.6"/>
<path d="M4 0.5 H20.5 L22 7.5 L11 11.5 Q8 5 4 0.5Z" fill="#4a4858" stroke="#111" stroke-width="0.9"/>
<path d="M11 11.5 L22 7.5 L22.5 17.5 L12.5 22.5 Q12.5 16 11 11.5Z" fill="#3a3a60" stroke="#111" stroke-width="0.9"/>
<path d="M12.5 22.5 L22.5 17.5 L29 21.5 L22 32 L15.5 31 Z" fill="#4a4858" stroke="#101060" stroke-width="1.6"/></svg><svg class="b" style="left:794px;top:96px" width="32" height="32" viewBox="0 0 32 32"><path d="M1 0.5 V25.5" stroke="#111" stroke-width="1.6"/>
<path d="M0 1 H1 M0 3 H1 M0 5 H1 M0 7 H1 M0 9 H1 M0 11 H1 M0 13 H1 M0 15 H1 M0 17 H1 M0 19 H1 M0 21 H1 M0 23 H1 M0 25 H1" stroke="#111" stroke-width="1"/>
<path d="M31 7 V32" stroke="#111" stroke-width="1.6"/>
<path d="M31 8 H32 M31 10 H32 M31 12 H32 M31 14 H32 M31 16 H32 M31 18 H32 M31 20 H32 M31 22 H32 M31 24 H32 M31 26 H32 M31 28 H32 M31 30 H32" stroke="#111" stroke-width="1"/>
<path d="M1.5 2 H7 L14 6 V29 L9 25.5 H1.5 Z" fill="#c4c4c4" stroke="#222" stroke-width="0.9"/>
<path d="M2 8 H7 Q10 9.5 7 11 H2 M2 16 H7 Q10 17.5 7 19 H2" fill="#f0f0f0" stroke="#555" stroke-width="0.6"/>
<path d="M17 6.5 H22 L30.5 12 V32 H22 L17 27 Z" fill="#c4c4c4" stroke="#222" stroke-width="0.9"/>
<path d="M30 14 H25 Q22 15.5 25 17 H30 M30 22 H25 Q22 23.5 25 25 H30" fill="#f0f0f0" stroke="#555" stroke-width="0.6"/>
<path d="M4 0.5 H20.5 L22 7.5 L11 11.5 Q8 5 4 0.5Z" fill="#f4f6f8" stroke="#111" stroke-width="0.9"/>
<path d="M11 11.5 L22 7.5 L22.5 17.5 L12.5 22.5 Q12.5 16 11 11.5Z" fill="#eaf2fa" stroke="#111" stroke-width="0.9"/>
<path d="M12.5 22.5 L22.5 17.5 L29 21.5 L22 32 L15.5 31 Z" fill="#f8f8f8" stroke="#101060" stroke-width="1.6"/></svg><svg class="b" style="left:840px;top:96px" width="32" height="32" viewBox="0 0 32 32"><path d="M1 0.5 V25.5" stroke="#111" stroke-width="1.6"/>
<path d="M0 1 H1 M0 3 H1 M0 5 H1 M0 7 H1 M0 9 H1 M0 11 H1 M0 13 H1 M0 15 H1 M0 17 H1 M0 19 H1 M0 21 H1 M0 23 H1 M0 25 H1" stroke="#111" stroke-width="1"/>
<path d="M31 7 V32" stroke="#111" stroke-width="1.6"/>
<path d="M31 8 H32 M31 10 H32 M31 12 H32 M31 14 H32 M31 16 H32 M31 18 H32 M31 20 H32 M31 22 H32 M31 24 H32 M31 26 H32 M31 28 H32 M31 30 H32" stroke="#111" stroke-width="1"/>
<path d="M1.5 2 H7 L14 6 V29 L9 25.5 H1.5 Z" fill="#c4c4c4" stroke="#222" stroke-width="0.9"/>
<path d="M2 8 H7 Q10 9.5 7 11 H2 M2 16 H7 Q10 17.5 7 19 H2" fill="#f0f0f0" stroke="#555" stroke-width="0.6"/>
<path d="M17 6.5 H22 L30.5 12 V32 H22 L17 27 Z" fill="#c4c4c4" stroke="#222" stroke-width="0.9"/>
<path d="M30 14 H25 Q22 15.5 25 17 H30 M30 22 H25 Q22 23.5 25 25 H30" fill="#f0f0f0" stroke="#555" stroke-width="0.6"/>
<path d="M4 0.5 H20.5 L22 7.5 L11 11.5 Q8 5 4 0.5Z" fill="#ee1010" stroke="#111" stroke-width="0.9"/>
<path d="M11 11.5 L22 7.5 L22.5 17.5 L12.5 22.5 Q12.5 16 11 11.5Z" fill="#10d040" stroke="#111" stroke-width="0.9"/>
<path d="M12.5 22.5 L22.5 17.5 L29 21.5 L22 32 L15.5 31 Z" fill="#50b0ff" stroke="#101060" stroke-width="1.6"/></svg><svg class="b" style="left:879px;top:96px" width="32" height="32" viewBox="0 0 32 32"><path d="M1 0.5 V25.5" stroke="#111" stroke-width="1.6"/>
<path d="M0 1 H1 M0 3 H1 M0 5 H1 M0 7 H1 M0 9 H1 M0 11 H1 M0 13 H1 M0 15 H1 M0 17 H1 M0 19 H1 M0 21 H1 M0 23 H1 M0 25 H1" stroke="#111" stroke-width="1"/>
<path d="M31 7 V32" stroke="#111" stroke-width="1.6"/>
<path d="M31 8 H32 M31 10 H32 M31 12 H32 M31 14 H32 M31 16 H32 M31 18 H32 M31 20 H32 M31 22 H32 M31 24 H32 M31 26 H32 M31 28 H32 M31 30 H32" stroke="#111" stroke-width="1"/>
<path d="M1.5 2 H7 L14 6 V29 L9 25.5 H1.5 Z" fill="#c4c4c4" stroke="#222" stroke-width="0.9"/>
<path d="M2 8 H7 Q10 9.5 7 11 H2 M2 16 H7 Q10 17.5 7 19 H2" fill="#f0f0f0" stroke="#555" stroke-width="0.6"/>
<path d="M17 6.5 H22 L30.5 12 V32 H22 L17 27 Z" fill="#c4c4c4" stroke="#222" stroke-width="0.9"/>
<path d="M30 14 H25 Q22 15.5 25 17 H30 M30 22 H25 Q22 23.5 25 25 H30" fill="#f0f0f0" stroke="#555" stroke-width="0.6"/>
<path d="M4 0.5 H20.5 L22 7.5 L11 11.5 Q8 5 4 0.5Z" fill="#ee1010" stroke="#111" stroke-width="0.9"/>
<path d="M11 11.5 L22 7.5 L22.5 17.5 L12.5 22.5 Q12.5 16 11 11.5Z" fill="#10d040" stroke="#111" stroke-width="0.9"/>
<path d="M12.5 22.5 L22.5 17.5 L29 21.5 L22 32 L15.5 31 Z" fill="#50b0ff" stroke="#101060" stroke-width="1.6"/></svg><svg class="b" style="left:918px;top:96px" width="32" height="32" viewBox="0 0 32 32"><defs><radialGradient id="pu" cx="0.5" cy="0.5" r="0.7"><stop offset="0" stop-color="#fff"/><stop offset="0.15" stop-color="#f0c0ff"/><stop offset="0.4" stop-color="#7020d0"/><stop offset="0.75" stop-color="#301060"/><stop offset="1" stop-color="#1a0510"/></radialGradient><clipPath id="puc"><rect width="32" height="32"/></clipPath></defs><rect width="32" height="32" fill="url(#pu)"/><g clip-path="url(#puc)"><path d="M16 16 L34.0 16.0" stroke="#b060ff" stroke-width="1" opacity="0.6"/><path d="M16 16 L32.6 22.9" stroke="#b060ff" stroke-width="1" opacity="0.6"/><path d="M16 16 L28.7 28.7" stroke="#b060ff" stroke-width="1" opacity="0.6"/><path d="M16 16 L22.9 32.6" stroke="#b060ff" stroke-width="1" opacity="0.6"/><path d="M16 16 L16.0 34.0" stroke="#b060ff" stroke-width="1" opacity="0.6"/><path d="M16 16 L9.1 32.6" stroke="#b060ff" stroke-width="1" opacity="0.6"/><path d="M16 16 L3.3 28.7" stroke="#b060ff" stroke-width="1" opacity="0.6"/><path d="M16 16 L-0.6 22.9" stroke="#b060ff" stroke-width="1" opacity="0.6"/><path d="M16 16 L-2.0 16.0" stroke="#b060ff" stroke-width="1" opacity="0.6"/><path d="M16 16 L-0.6 9.1" stroke="#b060ff" stroke-width="1" opacity="0.6"/><path d="M16 16 L3.3 3.3" stroke="#b060ff" stroke-width="1" opacity="0.6"/><path d="M16 16 L9.1 -0.6" stroke="#b060ff" stroke-width="1" opacity="0.6"/><path d="M16 16 L16.0 -2.0" stroke="#b060ff" stroke-width="1" opacity="0.6"/><path d="M16 16 L22.9 -0.6" stroke="#b060ff" stroke-width="1" opacity="0.6"/><path d="M16 16 L28.7 3.3" stroke="#b060ff" stroke-width="1" opacity="0.6"/><path d="M16 16 L32.6 9.1" stroke="#b060ff" stroke-width="1" opacity="0.6"/></g><ellipse cx="16" cy="15.5" rx="3.5" ry="5" fill="#d06090" stroke="#fff" stroke-width="1.2"/></svg><svg class="b" style="left:971px;top:96px" width="32" height="32" viewBox="0 0 32 32"><path d="M1 0.5 V25.5" stroke="#111" stroke-width="1.6"/>
<path d="M0 1 H1 M0 3 H1 M0 5 H1 M0 7 H1 M0 9 H1 M0 11 H1 M0 13 H1 M0 15 H1 M0 17 H1 M0 19 H1 M0 21 H1 M0 23 H1 M0 25 H1" stroke="#111" stroke-width="1"/>
<path d="M31 7 V32" stroke="#111" stroke-width="1.6"/>
<path d="M31 8 H32 M31 10 H32 M31 12 H32 M31 14 H32 M31 16 H32 M31 18 H32 M31 20 H32 M31 22 H32 M31 24 H32 M31 26 H32 M31 28 H32 M31 30 H32" stroke="#111" stroke-width="1"/>
<path d="M1.5 2 H7 L14 6 V29 L9 25.5 H1.5 Z" fill="#c4c4c4" stroke="#222" stroke-width="0.9"/>
<path d="M2 8 H7 Q10 9.5 7 11 H2 M2 16 H7 Q10 17.5 7 19 H2" fill="#f0f0f0" stroke="#555" stroke-width="0.6"/>
<path d="M17 6.5 H22 L30.5 12 V32 H22 L17 27 Z" fill="#c4c4c4" stroke="#222" stroke-width="0.9"/>
<path d="M30 14 H25 Q22 15.5 25 17 H30 M30 22 H25 Q22 23.5 25 25 H30" fill="#f0f0f0" stroke="#555" stroke-width="0.6"/>
<path d="M4 0.5 H20.5 L22 7.5 L11 11.5 Q8 5 4 0.5Z" fill="#e80010" stroke="#111" stroke-width="0.9"/>
<path d="M11 11.5 L22 7.5 L22.5 17.5 L12.5 22.5 Q12.5 16 11 11.5Z" fill="#e80010" stroke="#111" stroke-width="0.9"/>
<path d="M12.5 22.5 L22.5 17.5 L29 21.5 L22 32 L15.5 31 Z" fill="#e80010" stroke="#101060" stroke-width="1.6"/></svg><svg class="b" style="left:1010px;top:96px" width="32" height="32" viewBox="0 0 32 32"><path d="M1 0.5 V25.5" stroke="#111" stroke-width="1.6"/>
<path d="M0 1 H1 M0 3 H1 M0 5 H1 M0 7 H1 M0 9 H1 M0 11 H1 M0 13 H1 M0 15 H1 M0 17 H1 M0 19 H1 M0 21 H1 M0 23 H1 M0 25 H1" stroke="#111" stroke-width="1"/>
<path d="M31 7 V32" stroke="#111" stroke-width="1.6"/>
<path d="M31 8 H32 M31 10 H32 M31 12 H32 M31 14 H32 M31 16 H32 M31 18 H32 M31 20 H32 M31 22 H32 M31 24 H32 M31 26 H32 M31 28 H32 M31 30 H32" stroke="#111" stroke-width="1"/>
<path d="M1.5 2 H7 L14 6 V29 L9 25.5 H1.5 Z" fill="#c4c4c4" stroke="#222" stroke-width="0.9"/>
<path d="M2 8 H7 Q10 9.5 7 11 H2 M2 16 H7 Q10 17.5 7 19 H2" fill="#f0f0f0" stroke="#555" stroke-width="0.6"/>
<path d="M17 6.5 H22 L30.5 12 V32 H22 L17 27 Z" fill="#c4c4c4" stroke="#222" stroke-width="0.9"/>
<path d="M30 14 H25 Q22 15.5 25 17 H30 M30 22 H25 Q22 23.5 25 25 H30" fill="#f0f0f0" stroke="#555" stroke-width="0.6"/>
<path d="M4 0.5 H20.5 L22 7.5 L11 11.5 Q8 5 4 0.5Z" fill="#10c010" stroke="#111" stroke-width="0.9"/>
<path d="M11 11.5 L22 7.5 L22.5 17.5 L12.5 22.5 Q12.5 16 11 11.5Z" fill="#10c010" stroke="#111" stroke-width="0.9"/>
<path d="M12.5 22.5 L22.5 17.5 L29 21.5 L22 32 L15.5 31 Z" fill="#10c010" stroke="#101060" stroke-width="1.6"/></svg><svg class="b" style="left:1049px;top:96px" width="32" height="32" viewBox="0 0 32 32"><path d="M1 0.5 V25.5" stroke="#111" stroke-width="1.6"/>
<path d="M0 1 H1 M0 3 H1 M0 5 H1 M0 7 H1 M0 9 H1 M0 11 H1 M0 13 H1 M0 15 H1 M0 17 H1 M0 19 H1 M0 21 H1 M0 23 H1 M0 25 H1" stroke="#111" stroke-width="1"/>
<path d="M31 7 V32" stroke="#111" stroke-width="1.6"/>
<path d="M31 8 H32 M31 10 H32 M31 12 H32 M31 14 H32 M31 16 H32 M31 18 H32 M31 20 H32 M31 22 H32 M31 24 H32 M31 26 H32 M31 28 H32 M31 30 H32" stroke="#111" stroke-width="1"/>
<path d="M1.5 2 H7 L14 6 V29 L9 25.5 H1.5 Z" fill="#c4c4c4" stroke="#222" stroke-width="0.9"/>
<path d="M2 8 H7 Q10 9.5 7 11 H2 M2 16 H7 Q10 17.5 7 19 H2" fill="#f0f0f0" stroke="#555" stroke-width="0.6"/>
<path d="M17 6.5 H22 L30.5 12 V32 H22 L17 27 Z" fill="#c4c4c4" stroke="#222" stroke-width="0.9"/>
<path d="M30 14 H25 Q22 15.5 25 17 H30 M30 22 H25 Q22 23.5 25 25 H30" fill="#f0f0f0" stroke="#555" stroke-width="0.6"/>
<path d="M4 0.5 H20.5 L22 7.5 L11 11.5 Q8 5 4 0.5Z" fill="#1040e0" stroke="#111" stroke-width="0.9"/>
<path d="M11 11.5 L22 7.5 L22.5 17.5 L12.5 22.5 Q12.5 16 11 11.5Z" fill="#1040e0" stroke="#111" stroke-width="0.9"/>
<path d="M12.5 22.5 L22.5 17.5 L29 21.5 L22 32 L15.5 31 Z" fill="#1040e0" stroke="#101060" stroke-width="1.6"/></svg><svg class="b" style="left:1088px;top:96px" width="32" height="32" viewBox="0 0 32 32"><path d="M1 0.5 V25.5" stroke="#111" stroke-width="1.6"/>
<path d="M0 1 H1 M0 3 H1 M0 5 H1 M0 7 H1 M0 9 H1 M0 11 H1 M0 13 H1 M0 15 H1 M0 17 H1 M0 19 H1 M0 21 H1 M0 23 H1 M0 25 H1" stroke="#111" stroke-width="1"/>
<path d="M31 7 V32" stroke="#111" stroke-width="1.6"/>
<path d="M31 8 H32 M31 10 H32 M31 12 H32 M31 14 H32 M31 16 H32 M31 18 H32 M31 20 H32 M31 22 H32 M31 24 H32 M31 26 H32 M31 28 H32 M31 30 H32" stroke="#111" stroke-width="1"/>
<path d="M1.5 2 H7 L14 6 V29 L9 25.5 H1.5 Z" fill="#c4c4c4" stroke="#222" stroke-width="0.9"/>
<path d="M2 8 H7 Q10 9.5 7 11 H2 M2 16 H7 Q10 17.5 7 19 H2" fill="#f0f0f0" stroke="#555" stroke-width="0.6"/>
<path d="M17 6.5 H22 L30.5 12 V32 H22 L17 27 Z" fill="#c4c4c4" stroke="#222" stroke-width="0.9"/>
<path d="M30 14 H25 Q22 15.5 25 17 H30 M30 22 H25 Q22 23.5 25 25 H30" fill="#f0f0f0" stroke="#555" stroke-width="0.6"/>
<path d="M4 0.5 H20.5 L22 7.5 L11 11.5 Q8 5 4 0.5Z" fill="#f0e020" stroke="#111" stroke-width="0.9"/>
<path d="M11 11.5 L22 7.5 L22.5 17.5 L12.5 22.5 Q12.5 16 11 11.5Z" fill="#f0e020" stroke="#111" stroke-width="0.9"/>
<path d="M12.5 22.5 L22.5 17.5 L29 21.5 L22 32 L15.5 31 Z" fill="#f0e020" stroke="#101060" stroke-width="1.6"/></svg><svg class="b" style="left:1127px;top:96px" width="32" height="32" viewBox="0 0 32 32"><path d="M1 0.5 V25.5" stroke="#111" stroke-width="1.6"/>
<path d="M0 1 H1 M0 3 H1 M0 5 H1 M0 7 H1 M0 9 H1 M0 11 H1 M0 13 H1 M0 15 H1 M0 17 H1 M0 19 H1 M0 21 H1 M0 23 H1 M0 25 H1" stroke="#111" stroke-width="1"/>
<path d="M31 7 V32" stroke="#111" stroke-width="1.6"/>
<path d="M31 8 H32 M31 10 H32 M31 12 H32 M31 14 H32 M31 16 H32 M31 18 H32 M31 20 H32 M31 22 H32 M31 24 H32 M31 26 H32 M31 28 H32 M31 30 H32" stroke="#111" stroke-width="1"/>
<path d="M1.5 2 H7 L14 6 V29 L9 25.5 H1.5 Z" fill="#c4c4c4" stroke="#222" stroke-width="0.9"/>
<path d="M2 8 H7 Q10 9.5 7 11 H2 M2 16 H7 Q10 17.5 7 19 H2" fill="#f0f0f0" stroke="#555" stroke-width="0.6"/>
<path d="M17 6.5 H22 L30.5 12 V32 H22 L17 27 Z" fill="#c4c4c4" stroke="#222" stroke-width="0.9"/>
<path d="M30 14 H25 Q22 15.5 25 17 H30 M30 22 H25 Q22 23.5 25 25 H30" fill="#f0f0f0" stroke="#555" stroke-width="0.6"/>
<path d="M4 0.5 H20.5 L22 7.5 L11 11.5 Q8 5 4 0.5Z" fill="#10d0e0" stroke="#111" stroke-width="0.9"/>
<path d="M11 11.5 L22 7.5 L22.5 17.5 L12.5 22.5 Q12.5 16 11 11.5Z" fill="#10d0e0" stroke="#111" stroke-width="0.9"/>
<path d="M12.5 22.5 L22.5 17.5 L29 21.5 L22 32 L15.5 31 Z" fill="#10d0e0" stroke="#101060" stroke-width="1.6"/></svg><svg class="b" style="left:1166px;top:96px" width="32" height="32" viewBox="0 0 32 32"><path d="M1 0.5 V25.5" stroke="#111" stroke-width="1.6"/>
<path d="M0 1 H1 M0 3 H1 M0 5 H1 M0 7 H1 M0 9 H1 M0 11 H1 M0 13 H1 M0 15 H1 M0 17 H1 M0 19 H1 M0 21 H1 M0 23 H1 M0 25 H1" stroke="#111" stroke-width="1"/>
<path d="M31 7 V32" stroke="#111" stroke-width="1.6"/>
<path d="M31 8 H32 M31 10 H32 M31 12 H32 M31 14 H32 M31 16 H32 M31 18 H32 M31 20 H32 M31 22 H32 M31 24 H32 M31 26 H32 M31 28 H32 M31 30 H32" stroke="#111" stroke-width="1"/>
<path d="M1.5 2 H7 L14 6 V29 L9 25.5 H1.5 Z" fill="#c4c4c4" stroke="#222" stroke-width="0.9"/>
<path d="M2 8 H7 Q10 9.5 7 11 H2 M2 16 H7 Q10 17.5 7 19 H2" fill="#f0f0f0" stroke="#555" stroke-width="0.6"/>
<path d="M17 6.5 H22 L30.5 12 V32 H22 L17 27 Z" fill="#c4c4c4" stroke="#222" stroke-width="0.9"/>
<path d="M30 14 H25 Q22 15.5 25 17 H30 M30 22 H25 Q22 23.5 25 25 H30" fill="#f0f0f0" stroke="#555" stroke-width="0.6"/>
<path d="M4 0.5 H20.5 L22 7.5 L11 11.5 Q8 5 4 0.5Z" fill="#a010d0" stroke="#111" stroke-width="0.9"/>
<path d="M11 11.5 L22 7.5 L22.5 17.5 L12.5 22.5 Q12.5 16 11 11.5Z" fill="#a010d0" stroke="#111" stroke-width="0.9"/>
<path d="M12.5 22.5 L22.5 17.5 L29 21.5 L22 32 L15.5 31 Z" fill="#a010d0" stroke="#101060" stroke-width="1.6"/></svg><svg class="b" style="left:1205px;top:96px" width="32" height="32" viewBox="0 0 32 32"><path d="M1 0.5 V25.5" stroke="#111" stroke-width="1.6"/>
<path d="M0 1 H1 M0 3 H1 M0 5 H1 M0 7 H1 M0 9 H1 M0 11 H1 M0 13 H1 M0 15 H1 M0 17 H1 M0 19 H1 M0 21 H1 M0 23 H1 M0 25 H1" stroke="#111" stroke-width="1"/>
<path d="M31 7 V32" stroke="#111" stroke-width="1.6"/>
<path d="M31 8 H32 M31 10 H32 M31 12 H32 M31 14 H32 M31 16 H32 M31 18 H32 M31 20 H32 M31 22 H32 M31 24 H32 M31 26 H32 M31 28 H32 M31 30 H32" stroke="#111" stroke-width="1"/>
<path d="M1.5 2 H7 L14 6 V29 L9 25.5 H1.5 Z" fill="#c4c4c4" stroke="#222" stroke-width="0.9"/>
<path d="M2 8 H7 Q10 9.5 7 11 H2 M2 16 H7 Q10 17.5 7 19 H2" fill="#f0f0f0" stroke="#555" stroke-width="0.6"/>
<path d="M17 6.5 H22 L30.5 12 V32 H22 L17 27 Z" fill="#c4c4c4" stroke="#222" stroke-width="0.9"/>
<path d="M30 14 H25 Q22 15.5 25 17 H30 M30 22 H25 Q22 23.5 25 25 H30" fill="#f0f0f0" stroke="#555" stroke-width="0.6"/>
<path d="M4 0.5 H20.5 L22 7.5 L11 11.5 Q8 5 4 0.5Z" fill="#ee1010" stroke="#111" stroke-width="0.9"/>
<path d="M11 11.5 L22 7.5 L22.5 17.5 L12.5 22.5 Q12.5 16 11 11.5Z" fill="#10d040" stroke="#111" stroke-width="0.9"/>
<path d="M12.5 22.5 L22.5 17.5 L29 21.5 L22 32 L15.5 31 Z" fill="#50b0ff" stroke="#101060" stroke-width="1.6"/></svg><div class="b" style="left:0px;top:136px;width:1901px;height:886px;background:#8a8a8a"></div><div class="b" style="left:0px;top:133px;width:1901px;height:3px;background:#6f6f6f"></div><div class="b" style="left:1896px;top:133px;width:5px;height:888px;background:#707070"></div><div class="b" style="left:0px;top:133px;width:1px;height:888px;background:#a8a8a8"></div><div class="b" style="left:1px;top:133px;width:1px;height:888px;background:#6a6a6a"></div><div class="b" style="left:3px;top:137px;width:1304px;height:62px;background:#f6f6f6"></div><div class="b" style="left:5px;top:140px;width:1300px;height:57px;background:#ececec;box-shadow:inset 0 0 0 2px #7d7d7d;"></div><div class="b" style="left:7px;top:141px;width:1296px;height:6px;background:#7d7d7d"></div><div class="b" style="left:7px;top:141px;width:1296px;height:17px;background:linear-gradient(#e3eaf4,#edf2f9);border-radius:6px 6px 0 0;"></div><div class="b" style="left:7px;top:158px;width:1296px;height:1px;background:#a3a3a3"></div><div class="t" style="left:12.50px;top:144.49px;font-size:11px;line-height:11px;font-family:'Liberation Sans', sans-serif;font-weight:bold;color:#3a3a44;transform:scaleX(1.1862);transform-origin:0 0;">View</div><div class="b" style="left:1309px;top:137px;width:310px;height:62px;background:#f6f6f6"></div><div class="b" style="left:1311px;top:140px;width:306px;height:57px;background:#ececec;box-shadow:inset 0 0 0 2px #7d7d7d;"></div><div class="b" style="left:1313px;top:141px;width:302px;height:6px;background:#7d7d7d"></div><div class="b" style="left:1313px;top:141px;width:302px;height:17px;background:linear-gradient(#e3eaf4,#edf2f9);border-radius:6px 6px 0 0;"></div><div class="b" style="left:1313px;top:158px;width:302px;height:1px;background:#a3a3a3"></div><div class="t" style="left:1318.50px;top:144.49px;font-size:11px;line-height:11px;font-family:'Liberation Sans', sans-serif;font-weight:bold;color:#3a3a44;transform:scaleX(1.2067);transform-origin:0 0;">Sensor</div><div class="b" style="left:1619px;top:137px;width:124px;height:62px;background:#f6f6f6"></div><div class="b" style="left:1621px;top:140px;width:120px;height:57px;background:#ececec;box-shadow:inset 0 0 0 2px #7d7d7d;"></div><div class="b" style="left:1623px;top:141px;width:116px;height:6px;background:#7d7d7d"></div><div class="b" style="left:1623px;top:141px;width:116px;height:17px;background:linear-gradient(#e3eaf4,#edf2f9);border-radius:6px 6px 0 0;"></div><div class="b" style="left:1623px;top:158px;width:116px;height:1px;background:#a3a3a3"></div><div class="t" style="left:1628.50px;top:144.49px;font-size:11px;line-height:11px;font-family:'Liberation Sans', sans-serif;font-weight:bold;color:#3a3a44;transform:scaleX(1.2364);transform-origin:0 0;">Generator</div><div class="b" style="left:1743px;top:137px;width:154px;height:62px;background:#f6f6f6"></div><div class="b" style="left:1745px;top:140px;width:150px;height:57px;background:#ececec;box-shadow:inset 0 0 0 2px #7d7d7d;"></div><div class="b" style="left:1747px;top:141px;width:146px;height:6px;background:#7d7d7d"></div><div class="b" style="left:1747px;top:141px;width:146px;height:17px;background:linear-gradient(#e3eaf4,#edf2f9);border-radius:6px 6px 0 0;"></div><div class="b" style="left:1747px;top:158px;width:146px;height:1px;background:#a3a3a3"></div><div class="t" style="left:1752.50px;top:144.49px;font-size:11px;line-height:11px;font-family:'Liberation Sans', sans-serif;font-weight:bold;color:#3a3a44;transform:scaleX(1.2598);transform-origin:0 0;">Parameters</div><div class="b" style="left:7px;top:163px;width:198px;height:21px;background:#fff;box-shadow:inset 1px 1px 0 #6d6d6d, inset 2px 2px 0 #a0a0a0, inset -1px -1px 0 #d8d8d8"></div><div class="t" style="left:11.00px;top:169.84px;font-size:12px;line-height:12px;font-family:'Liberation Sans', sans-serif;font-weight:normal;color:#000;transform:scaleX(1.1333);transform-origin:0 0;">Gray scale</div><div class="b" style="left:187px;top:166px;width:18px;height:17px;background:#ececec;box-shadow:inset -1px -1px 0 #707070, inset 1px 1px 0 #fff"></div><svg class="b" style="left:192px;top:172px" width="8" height="5"><path d="M0 0H7L3.5 4Z" fill="#000"/></svg><div class="b" style="left:216px;top:161px;width:1055px;height:27px;background:#efefef;box-shadow:inset 1px 1px 0 #a0a0a0, inset -1px -1px 0 #fff"></div><div class="t" style="left:218.00px;top:162.61px;font-size:17px;line-height:17px;font-family:'Liberation Sans', sans-serif;font-weight:bold;color:#000;transform:scaleX(0.9436);transform-origin:0 0;">Color Space: HDTV Rec709 , White Point: D65, EOTF:  SDR, Power law (black compensation) w/gamma = 2.40, # of measures: 0 [20:21:40]</div><div class="b" style="left:1278px;top:163px;width:16px;height:13px;background:#f0f0f0;box-shadow:inset -1px -1px 0 #808080, inset 1px 1px 0 #fff"></div><div class="b" style="left:1278px;top:176px;width:16px;height:13px;background:#f0f0f0;box-shadow:inset -1px -1px 0 #808080, inset 1px 1px 0 #fff"></div><svg class="b" style="left:1283px;top:167px" width="6" height="4"><path d="M0 3H6L3 0Z" fill="#000"/></svg><svg class="b" style="left:1283px;top:180px" width="6" height="4"><path d="M0 0H6L3 3Z" fill="#000"/></svg><div class="b" style="left:1315px;top:160px;width:295px;height:18px;background:#f0f0f0"></div><div class="t" style="left:1316.00px;top:161.84px;font-size:12px;line-height:12px;font-family:'Liberation Sans', sans-serif;font-weight:normal;color:#000;transform:scaleX(1.1756);transform-origin:0 0;">Simulated sensor</div><div class="b" style="left:1316px;top:177px;width:80px;height:18px;background:#f0f0f0"></div><div class="t" style="left:1317.00px;top:178.84px;font-size:12px;line-height:12px;font-family:'Liberation Sans', sans-serif;font-weight:normal;color:#000;transform:scaleX(1.1991);transform-origin:0 0;">Adaptive</div><svg class="b" style="left:1424px;top:178px" width="12" height="13"><path d="M0.5 0.5 L11.5 6.5 L0.5 12.5Z" fill="#5cc85c" stroke="#3aa03a" stroke-width="0.6"/></svg><svg class="b" style="left:1588px;top:175px" width="18" height="18"><path d="M1.5 2.5 L11 1 L12 15 L2.5 17Z" fill="#c8dcf8" stroke="#1850b0" stroke-width="1.6"/><path d="M4 9 L6 12 L10 5" fill="none" stroke="#e0b030" stroke-width="1.4"/><path d="M8 12 L16 7" stroke="#1850b0" stroke-width="1.8"/><circle cx="16" cy="7" r="1.3" fill="#e04020"/></svg><div class="t" style="left:1624.00px;top:161.34px;font-size:12px;line-height:12px;font-family:'Liberation Sans', sans-serif;font-weight:normal;color:#000;transform:scaleX(1.0547);transform-origin:0 0;">GDI</div><svg class="b" style="left:1718px;top:177px" width="18" height="18"><path d="M1.5 2.5 L11 1 L12 15 L2.5 17Z" fill="#c8dcf8" stroke="#1850b0" stroke-width="1.6"/><path d="M4 9 L6 12 L10 5" fill="none" stroke="#e0b030" stroke-width="1.4"/><path d="M8 12 L16 7" stroke="#1850b0" stroke-width="1.8"/><circle cx="16" cy="7" r="1.3" fill="#e04020"/></svg><div class="b" style="left:1754px;top:162px;width:13px;height:13px;background:#fff;box-shadow:inset 1px 1px 0 #707070, inset 2px 2px 0 #b8b8b8, inset -1px -1px 0 #e8e8e8"></div><div class="t" style="left:1773.00px;top:162.84px;font-size:12px;line-height:12px;font-family:'Liberation Sans', sans-serif;font-weight:normal;color:#000;transform:scaleX(1.1379);transform-origin:0 0;">Reference</div><div class="b" style="left:1754px;top:179px;width:13px;height:13px;background:#eeeeee;box-shadow:inset 1px 1px 0 #808080, inset 2px 2px 0 #c0c0c0, inset -1px -1px 0 #e8e8e8"></div><div class="t" style="left:1773.00px;top:179.84px;font-size:12px;line-height:12px;font-family:'Liberation Sans', sans-serif;font-weight:normal;color:#a8a8a8;transform:scaleX(1.1506);transform-origin:0 0;">XYZ Adjustment</div><div class="b" style="left:3px;top:202px;width:1808px;height:221px;background:#f6f6f6"></div><div class="b" style="left:5px;top:205px;width:1804px;height:216px;background:#ececec;box-shadow:inset 0 0 0 2px #7d7d7d;"></div><div class="b" style="left:7px;top:206px;width:1800px;height:6px;background:#7d7d7d"></div><div class="b" style="left:7px;top:206px;width:1800px;height:16px;background:linear-gradient(#e3eaf4,#edf2f9);border-radius:6px 6px 0 0;"></div><div class="b" style="left:7px;top:222px;width:1800px;height:1px;background:#a3a3a3"></div><div class="b" style="left:6px;top:222px;width:1px;height:198px;background:#10d010"></div><div class="b" style="left:1807px;top:209px;width:1px;height:211px;background:#10d010"></div><div class="b" style="left:6px;top:419px;width:1802px;height:1px;background:#10d010"></div><div class="b" style="left:1790px;top:222px;width:17px;height:1px;background:#10d010"></div><div class="b" style="left:1803px;top:206px;width:4px;height:4px;border-top:1px solid #10d010;border-right:1px solid #10d010;border-radius:0 5px 0 0"></div><div class="b" style="left:6px;top:206px;width:4px;height:4px;border-top:1px solid #10d010;border-left:1px solid #10d010;border-radius:5px 0 0 0"></div><div class="t" style="left:14.60px;top:209.03px;font-size:10px;line-height:10px;font-family:'Liberation Sans', sans-serif;font-weight:bold;color:#3c3c4c;transform:scaleX(1.0948);transform-origin:0 0;">( Average Gamma: 2.29, Contrast: 3718:1 ) ( Average dE: 1.60 [1.01,1.15,0.00] max: 2.93 [CIE2000] ) [Absolute Y w/gamma]</div><div class="b" style="left:8px;top:219px;width:1786px;height:199px;background:#efefef;box-shadow:inset 1px 1px 0 #a0a0a0, inset 2px 2px 0 #686868"></div><div class="b" style="left:11px;top:221px;width:54px;height:22.5px;background:#efefef;box-shadow:inset -2px -1px 0 #6e6e6e, inset 1px 1px 0 #fff"></div><div class="t" style="left:15.80px;top:226.84px;font-size:12px;line-height:12px;font-family:'Liberation Sans', sans-serif;font-weight:bold;color:#000;transform:scaleX(0.9300);transform-origin:0 0;">% White</div><div class="b" style="left:11px;top:243.5px;width:54px;height:26.0px;background:#efefef;box-shadow:inset -2px -1px 0 #6e6e6e, inset 1px 1px 0 #fff"></div><div class="t" style="left:34.40px;top:250.14px;font-size:12px;line-height:12px;font-family:'Liberation Sans', sans-serif;font-weight:bold;color:#000;transform:scaleX(0.9300);transform-origin:0 0;">x</div><div class="b" style="left:11px;top:269.5px;width:54px;height:25.69999999999999px;background:#efefef;box-shadow:inset -2px -1px 0 #6e6e6e, inset 1px 1px 0 #fff"></div><div class="t" style="left:34.40px;top:276.14px;font-size:12px;line-height:12px;font-family:'Liberation Sans', sans-serif;font-weight:bold;color:#000;transform:scaleX(0.9300);transform-origin:0 0;">y</div><div class="b" style="left:11px;top:295.2px;width:54px;height:26.0px;background:#efefef;box-shadow:inset -2px -1px 0 #6e6e6e, inset 1px 1px 0 #fff"></div><div class="t" style="left:33.78px;top:301.84px;font-size:12px;line-height:12px;font-family:'Liberation Sans', sans-serif;font-weight:bold;color:#000;transform:scaleX(0.9300);transform-origin:0 0;">Y</div><div class="b" style="left:11px;top:321.2px;width:54px;height:26.0px;background:#efefef;box-shadow:inset -2px -1px 0 #6e6e6e, inset 1px 1px 0 #fff"></div><div class="t" style="left:18.58px;top:327.84px;font-size:12px;line-height:12px;font-family:'Liberation Sans', sans-serif;font-weight:bold;color:#000;transform:scaleX(0.9300);transform-origin:0 0;">Delta E</div><div class="b" style="left:11px;top:347.2px;width:54px;height:25.5px;background:#efefef;box-shadow:inset -2px -1px 0 #6e6e6e, inset 1px 1px 0 #fff"></div><div class="t" style="left:16.72px;top:353.84px;font-size:12px;line-height:12px;font-family:'Liberation Sans', sans-serif;font-weight:bold;color:#000;transform:scaleX(0.9300);transform-origin:0 0;">delta xy</div><div class="b" style="left:11px;top:372.7px;width:54px;height:25.30000000000001px;background:#efefef;box-shadow:inset -2px -1px 0 #6e6e6e, inset 1px 1px 0 #fff"></div><div class="t" style="left:16.82px;top:379.34px;font-size:12px;line-height:12px;font-family:'Liberation Sans', sans-serif;font-weight:bold;color:#000;transform:scaleX(0.9300);transform-origin:0 0;">Y target</div><div class="b" style="left:64.5px;top:221px;width:149.5px;height:22.5px;background:rgb(127,127,127);box-shadow:inset -1px -2px 0 #606060, inset 1px 1px 0 #fff"></div><div class="t" style="left:135.91px;top:227.34px;font-size:12px;line-height:12px;font-family:'Liberation Sans', sans-serif;font-weight:bold;color:#000;">0</div><div class="b" style="left:214px;top:221px;width:155px;height:22.5px;background:rgb(138,138,138);box-shadow:inset -1px -2px 0 #606060, inset 1px 1px 0 #fff"></div><div class="t" style="left:284.83px;top:227.34px;font-size:12px;line-height:12px;font-family:'Liberation Sans', sans-serif;font-weight:bold;color:#000;">10</div><div class="b" style="left:369px;top:221px;width:155px;height:22.5px;background:rgb(149,149,149);box-shadow:inset -1px -2px 0 #606060, inset 1px 1px 0 #fff"></div><div class="t" style="left:439.83px;top:227.34px;font-size:12px;line-height:12px;font-family:'Liberation Sans', sans-serif;font-weight:bold;color:#000;">20</div><div class="b" style="left:524px;top:221px;width:155px;height:22.5px;background:rgb(160,160,160);box-shadow:inset -1px -2px 0 #606060, inset 1px 1px 0 #fff"></div><div class="t" style="left:594.83px;top:227.34px;font-size:12px;line-height:12px;font-family:'Liberation Sans', sans-serif;font-weight:bold;color:#000;">30</div><div class="b" style="left:679px;top:221px;width:155px;height:22.5px;background:rgb(171,171,171);box-shadow:inset -1px -2px 0 #606060, inset 1px 1px 0 #fff"></div><div class="t" style="left:749.83px;top:227.34px;font-size:12px;line-height:12px;font-family:'Liberation Sans', sans-serif;font-weight:bold;color:#000;">40</div><div class="b" style="left:834px;top:221px;width:155px;height:22.5px;background:rgb(182,182,182);box-shadow:inset -1px -2px 0 #606060, inset 1px 1px 0 #fff"></div><div class="t" style="left:904.83px;top:227.34px;font-size:12px;line-height:12px;font-family:'Liberation Sans', sans-serif;font-weight:bold;color:#000;">50</div><div class="b" style="left:989px;top:221px;width:154.5px;height:22.5px;background:rgb(193,193,193);box-shadow:inset -1px -2px 0 #606060, inset 1px 1px 0 #fff"></div><div class="t" style="left:1059.58px;top:227.34px;font-size:12px;line-height:12px;font-family:'Liberation Sans', sans-serif;font-weight:bold;color:#000;">60</div><div class="b" style="left:1143.5px;top:221px;width:155.0px;height:22.5px;background:rgb(204,204,204);box-shadow:inset -1px -2px 0 #606060, inset 1px 1px 0 #fff"></div><div class="t" style="left:1214.33px;top:227.34px;font-size:12px;line-height:12px;font-family:'Liberation Sans', sans-serif;font-weight:bold;color:#000;">70</div><div class="b" style="left:1298.5px;top:221px;width:155.0px;height:22.5px;background:rgb(215,215,215);box-shadow:inset -1px -2px 0 #606060, inset 1px 1px 0 #fff"></div><div class="t" style="left:1369.33px;top:227.34px;font-size:12px;line-height:12px;font-family:'Liberation Sans', sans-serif;font-weight:bold;color:#000;">80</div><div class="b" style="left:1453.5px;top:221px;width:155.0px;height:22.5px;background:rgb(226,226,226);box-shadow:inset -1px -2px 0 #606060, inset 1px 1px 0 #fff"></div><div class="t" style="left:1524.33px;top:227.34px;font-size:12px;line-height:12px;font-family:'Liberation Sans', sans-serif;font-weight:bold;color:#000;">90</div><div class="b" style="left:1608.5px;top:221px;width:162.0px;height:22.5px;background:rgb(237,237,237);box-shadow:inset -1px -2px 0 #606060, inset 1px 1px 0 #fff"></div><div class="t" style="left:1679.49px;top:227.34px;font-size:12px;line-height:12px;font-family:'Liberation Sans', sans-serif;font-weight:bold;color:#000;">100</div><div class="b" style="left:64.5px;top:243.5px;width:149.5px;height:26.0px;background:#ffffff;box-shadow:inset -1px -1px 0 #c4c4c4"></div><div class="t" style="left:179.40px;top:251.84px;font-size:12px;line-height:12px;font-family:'Liberation Sans', sans-serif;font-weight:normal;color:#000;transform:scaleX(0.8882);transform-origin:0 0;">0.2325</div><div class="b" style="left:214px;top:243.5px;width:155px;height:26.0px;background:#ffffff;box-shadow:inset -1px -1px 0 #c4c4c4"></div><div class="t" style="left:334.40px;top:251.84px;font-size:12px;line-height:12px;font-family:'Liberation Sans', sans-serif;font-weight:normal;color:#000;transform:scaleX(0.8882);transform-origin:0 0;">0.3095</div><div class="b" style="left:369px;top:243.5px;width:155px;height:26.0px;background:#ffffff;box-shadow:inset -1px -1px 0 #c4c4c4"></div><div class="t" style="left:489.40px;top:251.84px;font-size:12px;line-height:12px;font-family:'Liberation Sans', sans-serif;font-weight:normal;color:#000;transform:scaleX(0.8882);transform-origin:0 0;">0.3030</div><div class="b" style="left:524px;top:243.5px;width:155px;height:26.0px;background:#ffffff;box-shadow:inset -1px -1px 0 #c4c4c4"></div><div class="t" style="left:644.40px;top:251.84px;font-size:12px;line-height:12px;font-family:'Liberation Sans', sans-serif;font-weight:normal;color:#000;transform:scaleX(0.8882);transform-origin:0 0;">0.3050</div><div class="b" style="left:679px;top:243.5px;width:155px;height:26.0px;background:#ffffff;box-shadow:inset -1px -1px 0 #c4c4c4"></div><div class="t" style="left:799.40px;top:251.84px;font-size:12px;line-height:12px;font-family:'Liberation Sans', sans-serif;font-weight:normal;color:#000;transform:scaleX(0.8882);transform-origin:0 0;">0.3079</div><div class="b" style="left:834px;top:243.5px;width:155px;height:26.0px;background:#ffffff;box-shadow:inset -1px -1px 0 #c4c4c4"></div><div class="t" style="left:954.40px;top:251.84px;font-size:12px;line-height:12px;font-family:'Liberation Sans', sans-serif;font-weight:normal;color:#000;transform:scaleX(0.8882);transform-origin:0 0;">0.3104</div><div class="b" style="left:989px;top:243.5px;width:154.5px;height:26.0px;background:#ffffff;box-shadow:inset -1px -1px 0 #c4c4c4"></div><div class="t" style="left:1108.90px;top:251.84px;font-size:12px;line-height:12px;font-family:'Liberation Sans', sans-serif;font-weight:normal;color:#000;transform:scaleX(0.8882);transform-origin:0 0;">0.3120</div><div class="b" style="left:1143.5px;top:243.5px;width:155.0px;height:26.0px;background:#ffffff;box-shadow:inset -1px -1px 0 #c4c4c4"></div><div class="t" style="left:1263.90px;top:251.84px;font-size:12px;line-height:12px;font-family:'Liberation Sans', sans-serif;font-weight:normal;color:#000;transform:scaleX(0.8882);transform-origin:0 0;">0.3130</div><div class="b" style="left:1298.5px;top:243.5px;width:155.0px;height:26.0px;background:#ffffff;box-shadow:inset -1px -1px 0 #c4c4c4"></div><div class="t" style="left:1418.90px;top:251.84px;font-size:12px;line-height:12px;font-family:'Liberation Sans', sans-serif;font-weight:normal;color:#000;transform:scaleX(0.8882);transform-origin:0 0;">0.3136</div><div class="b" style="left:1453.5px;top:243.5px;width:155.0px;height:26.0px;background:#ffffff;box-shadow:inset -1px -1px 0 #c4c4c4"></div><div class="t" style="left:1573.90px;top:251.84px;font-size:12px;line-height:12px;font-family:'Liberation Sans', sans-serif;font-weight:normal;color:#000;transform:scaleX(0.8882);transform-origin:0 0;">0.3148</div><div class="b" style="left:1608.5px;top:243.5px;width:162.0px;height:26.0px;background:#ffffff;box-shadow:inset -1px -1px 0 #c4c4c4"></div><div class="t" style="left:1735.90px;top:251.84px;font-size:12px;line-height:12px;font-family:'Liberation Sans', sans-serif;font-weight:normal;color:#000;transform:scaleX(0.8882);transform-origin:0 0;">0.3152</div><div class="b" style="left:64.5px;top:269.5px;width:149.5px;height:25.69999999999999px;background:#ffffff;box-shadow:inset -1px -1px 0 #c4c4c4"></div><div class="t" style="left:179.40px;top:277.84px;font-size:12px;line-height:12px;font-family:'Liberation Sans', sans-serif;font-weight:normal;color:#000;transform:scaleX(0.8882);transform-origin:0 0;">0.1918</div><div class="b" style="left:214px;top:269.5px;width:155px;height:25.69999999999999px;background:#ffffff;box-shadow:inset -1px -1px 0 #c4c4c4"></div><div class="t" style="left:334.40px;top:277.84px;font-size:12px;line-height:12px;font-family:'Liberation Sans', sans-serif;font-weight:normal;color:#000;transform:scaleX(0.8882);transform-origin:0 0;">0.3266</div><div class="b" style="left:369px;top:269.5px;width:155px;height:25.69999999999999px;background:#ffffff;box-shadow:inset -1px -1px 0 #c4c4c4"></div><div class="t" style="left:489.40px;top:277.84px;font-size:12px;line-height:12px;font-family:'Liberation Sans', sans-serif;font-weight:normal;color:#000;transform:scaleX(0.8882);transform-origin:0 0;">0.3163</div><div class="b" style="left:524px;top:269.5px;width:155px;height:25.69999999999999px;background:#ffffff;box-shadow:inset -1px -1px 0 #c4c4c4"></div><div class="t" style="left:644.40px;top:277.84px;font-size:12px;line-height:12px;font-family:'Liberation Sans', sans-serif;font-weight:normal;color:#000;transform:scaleX(0.8882);transform-origin:0 0;">0.3195</div><div class="b" style="left:679px;top:269.5px;width:155px;height:25.69999999999999px;background:#ffffff;box-shadow:inset -1px -1px 0 #c4c4c4"></div><div class="t" style="left:799.40px;top:277.84px;font-size:12px;line-height:12px;font-family:'Liberation Sans', sans-serif;font-weight:normal;color:#000;transform:scaleX(0.8882);transform-origin:0 0;">0.3227</div><div class="b" style="left:834px;top:269.5px;width:155px;height:25.69999999999999px;background:#ffffff;box-shadow:inset -1px -1px 0 #c4c4c4"></div><div class="t" style="left:954.40px;top:277.84px;font-size:12px;line-height:12px;font-family:'Liberation Sans', sans-serif;font-weight:normal;color:#000;transform:scaleX(0.8882);transform-origin:0 0;">0.3250</div><div class="b" style="left:989px;top:269.5px;width:154.5px;height:25.69999999999999px;background:#ffffff;box-shadow:inset -1px -1px 0 #c4c4c4"></div><div class="t" style="left:1108.90px;top:277.84px;font-size:12px;line-height:12px;font-family:'Liberation Sans', sans-serif;font-weight:normal;color:#000;transform:scaleX(0.8882);transform-origin:0 0;">0.3269</div><div class="b" style="left:1143.5px;top:269.5px;width:155.0px;height:25.69999999999999px;background:#ffffff;box-shadow:inset -1px -1px 0 #c4c4c4"></div><div class="t" style="left:1263.90px;top:277.84px;font-size:12px;line-height:12px;font-family:'Liberation Sans', sans-serif;font-weight:normal;color:#000;transform:scaleX(0.8882);transform-origin:0 0;">0.3285</div><div class="b" style="left:1298.5px;top:269.5px;width:155.0px;height:25.69999999999999px;background:#ffffff;box-shadow:inset -1px -1px 0 #c4c4c4"></div><div class="t" style="left:1418.90px;top:277.84px;font-size:12px;line-height:12px;font-family:'Liberation Sans', sans-serif;font-weight:normal;color:#000;transform:scaleX(0.8882);transform-origin:0 0;">0.3297</div><div class="b" style="left:1453.5px;top:269.5px;width:155.0px;height:25.69999999999999px;background:#ffffff;box-shadow:inset -1px -1px 0 #c4c4c4"></div><div class="t" style="left:1573.90px;top:277.84px;font-size:12px;line-height:12px;font-family:'Liberation Sans', sans-serif;font-weight:normal;color:#000;transform:scaleX(0.8882);transform-origin:0 0;">0.3307</div><div class="b" style="left:1608.5px;top:269.5px;width:162.0px;height:25.69999999999999px;background:#ffffff;box-shadow:inset -1px -1px 0 #c4c4c4"></div><div class="t" style="left:1735.90px;top:277.84px;font-size:12px;line-height:12px;font-family:'Liberation Sans', sans-serif;font-weight:normal;color:#000;transform:scaleX(0.8882);transform-origin:0 0;">0.3312</div><div class="b" style="left:64.5px;top:295.2px;width:149.5px;height:26.0px;background:#ffffff;box-shadow:inset -1px -1px 0 #c4c4c4"></div><div class="t" style="left:185.33px;top:303.54px;font-size:12px;line-height:12px;font-family:'Liberation Sans', sans-serif;font-weight:normal;color:#000;transform:scaleX(0.8882);transform-origin:0 0;">0.035</div><div class="b" style="left:214px;top:295.2px;width:155px;height:26.0px;background:#ffffff;box-shadow:inset -1px -1px 0 #c4c4c4"></div><div class="t" style="left:340.33px;top:303.54px;font-size:12px;line-height:12px;font-family:'Liberation Sans', sans-serif;font-weight:normal;color:#000;transform:scaleX(0.8882);transform-origin:0 0;">0.804</div><div class="b" style="left:369px;top:295.2px;width:155px;height:26.0px;background:#ffffff;box-shadow:inset -1px -1px 0 #c4c4c4"></div><div class="t" style="left:495.33px;top:303.54px;font-size:12px;line-height:12px;font-family:'Liberation Sans', sans-serif;font-weight:normal;color:#000;transform:scaleX(0.8882);transform-origin:0 0;">3.691</div><div class="b" style="left:524px;top:295.2px;width:155px;height:26.0px;background:#ffffff;box-shadow:inset -1px -1px 0 #c4c4c4"></div><div class="t" style="left:650.33px;top:303.54px;font-size:12px;line-height:12px;font-family:'Liberation Sans', sans-serif;font-weight:normal;color:#000;transform:scaleX(0.8882);transform-origin:0 0;">8.709</div><div class="b" style="left:679px;top:295.2px;width:155px;height:26.0px;background:#ffffff;box-shadow:inset -1px -1px 0 #c4c4c4"></div><div class="t" style="left:799.40px;top:303.54px;font-size:12px;line-height:12px;font-family:'Liberation Sans', sans-serif;font-weight:normal;color:#000;transform:scaleX(0.8882);transform-origin:0 0;">16.293</div><div class="b" style="left:834px;top:295.2px;width:155px;height:26.0px;background:#ffffff;box-shadow:inset -1px -1px 0 #c4c4c4"></div><div class="t" style="left:954.40px;top:303.54px;font-size:12px;line-height:12px;font-family:'Liberation Sans', sans-serif;font-weight:normal;color:#000;transform:scaleX(0.8882);transform-origin:0 0;">26.643</div><div class="b" style="left:989px;top:295.2px;width:154.5px;height:26.0px;background:#ffffff;box-shadow:inset -1px -1px 0 #c4c4c4"></div><div class="t" style="left:1108.90px;top:303.54px;font-size:12px;line-height:12px;font-family:'Liberation Sans', sans-serif;font-weight:normal;color:#000;transform:scaleX(0.8882);transform-origin:0 0;">39.531</div><div class="b" style="left:1143.5px;top:295.2px;width:155.0px;height:26.0px;background:#ffffff;box-shadow:inset -1px -1px 0 #c4c4c4"></div><div class="t" style="left:1263.90px;top:303.54px;font-size:12px;line-height:12px;font-family:'Liberation Sans', sans-serif;font-weight:normal;color:#000;transform:scaleX(0.8882);transform-origin:0 0;">56.564</div><div class="b" style="left:1298.5px;top:295.2px;width:155.0px;height:26.0px;background:#ffffff;box-shadow:inset -1px -1px 0 #c4c4c4"></div><div class="t" style="left:1418.90px;top:303.54px;font-size:12px;line-height:12px;font-family:'Liberation Sans', sans-serif;font-weight:normal;color:#000;transform:scaleX(0.8882);transform-origin:0 0;">77.063</div><div class="b" style="left:1453.5px;top:295.2px;width:155.0px;height:26.0px;background:#ffffff;box-shadow:inset -1px -1px 0 #c4c4c4"></div><div class="t" style="left:1567.97px;top:303.54px;font-size:12px;line-height:12px;font-family:'Liberation Sans', sans-serif;font-weight:normal;color:#000;transform:scaleX(0.8882);transform-origin:0 0;">101.639</div><div class="b" style="left:1608.5px;top:295.2px;width:162.0px;height:26.0px;background:#ffffff;box-shadow:inset -1px -1px 0 #c4c4c4"></div><div class="t" style="left:1729.97px;top:303.54px;font-size:12px;line-height:12px;font-family:'Liberation Sans', sans-serif;font-weight:normal;color:#000;transform:scaleX(0.8882);transform-origin:0 0;">130.399</div><div class="b" style="left:64.5px;top:321.2px;width:149.5px;height:26.0px;background:#dcdcdc;box-shadow:inset -1px -1px 0 #c4c4c4"></div><div class="b" style="left:214px;top:321.2px;width:155px;height:26.0px;background:#b0ffb0;box-shadow:inset -1px -1px 0 #c4c4c4"></div><div class="t" style="left:351.15px;top:329.54px;font-size:12px;line-height:12px;font-family:'Liberation Sans', sans-serif;font-weight:bold;color:#000;transform:scaleX(0.9500);transform-origin:0 0;">1.0</div><div class="b" style="left:369px;top:321.2px;width:155px;height:26.0px;background:#ffffb0;box-shadow:inset -1px -1px 0 #c4c4c4"></div><div class="t" style="left:506.15px;top:329.54px;font-size:12px;line-height:12px;font-family:'Liberation Sans', sans-serif;font-weight:bold;color:#000;transform:scaleX(0.9500);transform-origin:0 0;">2.9</div><div class="b" style="left:524px;top:321.2px;width:155px;height:26.0px;background:#ffffb0;box-shadow:inset -1px -1px 0 #c4c4c4"></div><div class="t" style="left:661.15px;top:329.54px;font-size:12px;line-height:12px;font-family:'Liberation Sans', sans-serif;font-weight:bold;color:#000;transform:scaleX(0.9500);transform-origin:0 0;">2.8</div><div class="b" style="left:679px;top:321.2px;width:155px;height:26.0px;background:#ffffb0;box-shadow:inset -1px -1px 0 #c4c4c4"></div><div class="t" style="left:816.15px;top:329.54px;font-size:12px;line-height:12px;font-family:'Liberation Sans', sans-serif;font-weight:bold;color:#000;transform:scaleX(0.9500);transform-origin:0 0;">2.5</div><div class="b" style="left:834px;top:321.2px;width:155px;height:26.0px;background:#b0ffb0;box-shadow:inset -1px -1px 0 #c4c4c4"></div><div class="t" style="left:971.15px;top:329.54px;font-size:12px;line-height:12px;font-family:'Liberation Sans', sans-serif;font-weight:bold;color:#000;transform:scaleX(0.9500);transform-origin:0 0;">1.9</div><div class="b" style="left:989px;top:321.2px;width:154.5px;height:26.0px;background:#b0ffb0;box-shadow:inset -1px -1px 0 #c4c4c4"></div><div class="t" style="left:1125.65px;top:329.54px;font-size:12px;line-height:12px;font-family:'Liberation Sans', sans-serif;font-weight:bold;color:#000;transform:scaleX(0.9500);transform-origin:0 0;">1.3</div><div class="b" style="left:1143.5px;top:321.2px;width:155.0px;height:26.0px;background:#b0ffb0;box-shadow:inset -1px -1px 0 #c4c4c4"></div><div class="t" style="left:1280.65px;top:329.54px;font-size:12px;line-height:12px;font-family:'Liberation Sans', sans-serif;font-weight:bold;color:#000;transform:scaleX(0.9500);transform-origin:0 0;">0.7</div><div class="b" style="left:1298.5px;top:321.2px;width:155.0px;height:26.0px;background:#b0ffb0;box-shadow:inset -1px -1px 0 #c4c4c4"></div><div class="t" style="left:1435.65px;top:329.54px;font-size:12px;line-height:12px;font-family:'Liberation Sans', sans-serif;font-weight:bold;color:#000;transform:scaleX(0.9500);transform-origin:0 0;">0.5</div><div class="b" style="left:1453.5px;top:321.2px;width:155.0px;height:26.0px;background:#b0ffb0;box-shadow:inset -1px -1px 0 #c4c4c4"></div><div class="t" style="left:1590.65px;top:329.54px;font-size:12px;line-height:12px;font-family:'Liberation Sans', sans-serif;font-weight:bold;color:#000;transform:scaleX(0.9500);transform-origin:0 0;">1.0</div><div class="b" style="left:1608.5px;top:321.2px;width:162.0px;height:26.0px;background:#b0ffb0;box-shadow:inset -1px -1px 0 #c4c4c4"></div><div class="t" style="left:1752.65px;top:329.54px;font-size:12px;line-height:12px;font-family:'Liberation Sans', sans-serif;font-weight:bold;color:#000;transform:scaleX(0.9500);transform-origin:0 0;">1.3</div><div class="b" style="left:64.5px;top:347.2px;width:149.5px;height:25.5px;background:#efefef;box-shadow:inset -1px -1px 0 #c4c4c4"></div><div class="b" style="left:214px;top:347.2px;width:155px;height:25.5px;background:#efefef;box-shadow:inset -1px -1px 0 #c4c4c4"></div><div class="t" style="left:334.40px;top:355.54px;font-size:12px;line-height:12px;font-family:'Liberation Sans', sans-serif;font-weight:normal;color:#000;transform:scaleX(0.8882);transform-origin:0 0;">0.0040</div><div class="b" style="left:369px;top:347.2px;width:155px;height:25.5px;background:#efefef;box-shadow:inset -1px -1px 0 #c4c4c4"></div><div class="t" style="left:489.40px;top:355.54px;font-size:12px;line-height:12px;font-family:'Liberation Sans', sans-serif;font-weight:normal;color:#000;transform:scaleX(0.8882);transform-origin:0 0;">0.0160</div><div class="b" style="left:524px;top:347.2px;width:155px;height:25.5px;background:#efefef;box-shadow:inset -1px -1px 0 #c4c4c4"></div><div class="t" style="left:644.40px;top:355.54px;font-size:12px;line-height:12px;font-family:'Liberation Sans', sans-serif;font-weight:normal;color:#000;transform:scaleX(0.8882);transform-origin:0 0;">0.0123</div><div class="b" style="left:679px;top:347.2px;width:155px;height:25.5px;background:#efefef;box-shadow:inset -1px -1px 0 #c4c4c4"></div><div class="t" style="left:799.40px;top:355.54px;font-size:12px;line-height:12px;font-family:'Liberation Sans', sans-serif;font-weight:normal;color:#000;transform:scaleX(0.8882);transform-origin:0 0;">0.0079</div><div class="b" style="left:834px;top:347.2px;width:155px;height:25.5px;background:#efefef;box-shadow:inset -1px -1px 0 #c4c4c4"></div><div class="t" style="left:954.40px;top:355.54px;font-size:12px;line-height:12px;font-family:'Liberation Sans', sans-serif;font-weight:normal;color:#000;transform:scaleX(0.8882);transform-origin:0 0;">0.0046</div><div class="b" style="left:989px;top:347.2px;width:154.5px;height:25.5px;background:#efefef;box-shadow:inset -1px -1px 0 #c4c4c4"></div><div class="t" style="left:1108.90px;top:355.54px;font-size:12px;line-height:12px;font-family:'Liberation Sans', sans-serif;font-weight:normal;color:#000;transform:scaleX(0.8882);transform-origin:0 0;">0.0022</div><div class="b" style="left:1143.5px;top:347.2px;width:155.0px;height:25.5px;background:#efefef;box-shadow:inset -1px -1px 0 #c4c4c4"></div><div class="t" style="left:1263.90px;top:355.54px;font-size:12px;line-height:12px;font-family:'Liberation Sans', sans-serif;font-weight:normal;color:#000;transform:scaleX(0.8882);transform-origin:0 0;">0.0006</div><div class="b" style="left:1298.5px;top:347.2px;width:155.0px;height:25.5px;background:#efefef;box-shadow:inset -1px -1px 0 #c4c4c4"></div><div class="t" style="left:1419.69px;top:355.54px;font-size:12px;line-height:12px;font-family:'Liberation Sans', sans-serif;font-weight:normal;color:#000;transform:scaleX(0.8882);transform-origin:0 0;">0.0011</div><div class="b" style="left:1453.5px;top:347.2px;width:155.0px;height:25.5px;background:#efefef;box-shadow:inset -1px -1px 0 #c4c4c4"></div><div class="t" style="left:1573.90px;top:355.54px;font-size:12px;line-height:12px;font-family:'Liberation Sans', sans-serif;font-weight:normal;color:#000;transform:scaleX(0.8882);transform-origin:0 0;">0.0027</div><div class="b" style="left:1608.5px;top:347.2px;width:162.0px;height:25.5px;background:#efefef;box-shadow:inset -1px -1px 0 #c4c4c4"></div><div class="t" style="left:1735.90px;top:355.54px;font-size:12px;line-height:12px;font-family:'Liberation Sans', sans-serif;font-weight:normal;color:#000;transform:scaleX(0.8882);transform-origin:0 0;">0.0033</div><div class="b" style="left:64.5px;top:372.7px;width:149.5px;height:25.30000000000001px;background:#dcdcdc;box-shadow:inset -1px -1px 0 #c4c4c4"></div><div class="t" style="left:185.33px;top:381.04px;font-size:12px;line-height:12px;font-family:'Liberation Sans', sans-serif;font-weight:normal;color:#000;transform:scaleX(0.8882);transform-origin:0 0;">0.035</div><div class="b" style="left:214px;top:372.7px;width:155px;height:25.30000000000001px;background:#dcdcdc;box-shadow:inset -1px -1px 0 #c4c4c4"></div><div class="t" style="left:340.33px;top:381.04px;font-size:12px;line-height:12px;font-family:'Liberation Sans', sans-serif;font-weight:normal;color:#000;transform:scaleX(0.8882);transform-origin:0 0;">0.560</div><div class="b" style="left:369px;top:372.7px;width:155px;height:25.30000000000001px;background:#dcdcdc;box-shadow:inset -1px -1px 0 #c4c4c4"></div><div class="t" style="left:495.33px;top:381.04px;font-size:12px;line-height:12px;font-family:'Liberation Sans', sans-serif;font-weight:normal;color:#000;transform:scaleX(0.8882);transform-origin:0 0;">2.805</div><div class="b" style="left:524px;top:372.7px;width:155px;height:25.30000000000001px;background:#dcdcdc;box-shadow:inset -1px -1px 0 #c4c4c4"></div><div class="t" style="left:650.33px;top:381.04px;font-size:12px;line-height:12px;font-family:'Liberation Sans', sans-serif;font-weight:normal;color:#000;transform:scaleX(0.8882);transform-origin:0 0;">7.364</div><div class="b" style="left:679px;top:372.7px;width:155px;height:25.30000000000001px;background:#dcdcdc;box-shadow:inset -1px -1px 0 #c4c4c4"></div><div class="t" style="left:799.40px;top:381.04px;font-size:12px;line-height:12px;font-family:'Liberation Sans', sans-serif;font-weight:normal;color:#000;transform:scaleX(0.8882);transform-origin:0 0;">14.652</div><div class="b" style="left:834px;top:372.7px;width:155px;height:25.30000000000001px;background:#dcdcdc;box-shadow:inset -1px -1px 0 #c4c4c4"></div><div class="t" style="left:954.40px;top:381.04px;font-size:12px;line-height:12px;font-family:'Liberation Sans', sans-serif;font-weight:normal;color:#000;transform:scaleX(0.8882);transform-origin:0 0;">25.006</div><div class="b" style="left:989px;top:372.7px;width:154.5px;height:25.30000000000001px;background:#dcdcdc;box-shadow:inset -1px -1px 0 #c4c4c4"></div><div class="t" style="left:1108.90px;top:381.04px;font-size:12px;line-height:12px;font-family:'Liberation Sans', sans-serif;font-weight:normal;color:#000;transform:scaleX(0.8882);transform-origin:0 0;">38.014</div><div class="b" style="left:1143.5px;top:372.7px;width:155.0px;height:25.30000000000001px;background:#dcdcdc;box-shadow:inset -1px -1px 0 #c4c4c4"></div><div class="t" style="left:1263.90px;top:381.04px;font-size:12px;line-height:12px;font-family:'Liberation Sans', sans-serif;font-weight:normal;color:#000;transform:scaleX(0.8882);transform-origin:0 0;">55.161</div><div class="b" style="left:1298.5px;top:372.7px;width:155.0px;height:25.30000000000001px;background:#dcdcdc;box-shadow:inset -1px -1px 0 #c4c4c4"></div><div class="t" style="left:1418.90px;top:381.04px;font-size:12px;line-height:12px;font-family:'Liberation Sans', sans-serif;font-weight:normal;color:#000;transform:scaleX(0.8882);transform-origin:0 0;">76.135</div><div class="b" style="left:1453.5px;top:372.7px;width:155.0px;height:25.30000000000001px;background:#dcdcdc;box-shadow:inset -1px -1px 0 #c4c4c4"></div><div class="t" style="left:1567.97px;top:381.04px;font-size:12px;line-height:12px;font-family:'Liberation Sans', sans-serif;font-weight:normal;color:#000;transform:scaleX(0.8882);transform-origin:0 0;">101.149</div><div class="b" style="left:1608.5px;top:372.7px;width:162.0px;height:25.30000000000001px;background:#dcdcdc;box-shadow:inset -1px -1px 0 #c4c4c4"></div><div class="t" style="left:1729.97px;top:381.04px;font-size:12px;line-height:12px;font-family:'Liberation Sans', sans-serif;font-weight:normal;color:#000;transform:scaleX(0.8882);transform-origin:0 0;">130.399</div><div class="b" style="left:10px;top:398px;width:1760px;height:19px;background:#f0f0f0"></div><svg class="b" style="left:15px;top:402px" width="8" height="10"><path d="M6 1 L2 5 L6 9" fill="none" stroke="#a8a8a8" stroke-width="1.6"/></svg><svg class="b" style="left:1758px;top:402px" width="8" height="10"><path d="M2 1 L6 5 L2 9" fill="none" stroke="#a8a8a8" stroke-width="1.6"/></svg><div class="b" style="left:1770.5px;top:221px;width:19px;height:177px;background:#f0f0f0"></div><svg class="b" style="left:1775px;top:226px" width="10" height="8"><path d="M1 6 L5 2 L9 6" fill="none" stroke="#a8a8a8" stroke-width="1.6"/></svg><svg class="b" style="left:1775px;top:385px" width="10" height="8"><path d="M1 2 L5 6 L9 2" fill="none" stroke="#a8a8a8" stroke-width="1.6"/></svg><div class="b" style="left:1813px;top:202px;width:84px;height:104px;background:#f6f6f6"></div><div class="b" style="left:1815px;top:205px;width:80px;height:99px;background:#ececec;box-shadow:inset 0 0 0 2px #7d7d7d;"></div><div class="b" style="left:1817px;top:206px;width:76px;height:6px;background:#7d7d7d"></div><div class="b" style="left:1817px;top:206px;width:76px;height:17px;background:linear-gradient(#e3eaf4,#edf2f9);border-radius:6px 6px 0 0;"></div><div class="b" style="left:1817px;top:223px;width:76px;height:1px;background:#a3a3a3"></div><div class="t" style="left:1822.50px;top:209.49px;font-size:11px;line-height:11px;font-family:'Liberation Sans', sans-serif;font-weight:bold;color:#3a3a44;transform:scaleX(1.2088);transform-origin:0 0;">Display</div><div class="b" style="left:1822px;top:224px;width:66px;height:15px;background:#f0f0f0"></div><svg class="b" style="left:1823px;top:224px" width="12" height="12"><circle cx="6" cy="6" r="5.5" fill="#fff"/><path d="M2.1 9.9 A5.5 5.5 0 0 1 9.9 2.1" fill="none" stroke="#b0b0b0" stroke-width="1.2"/></svg><div class="t" style="left:1841.50px;top:225.84px;font-size:12px;line-height:12px;font-family:'Liberation Sans', sans-serif;font-weight:normal;color:#a0a0a0;transform:scaleX(0.9500);transform-origin:0 0;">Sensor</div><div class="b" style="left:1822px;top:239.5px;width:66px;height:15px;background:#f0f0f0"></div><svg class="b" style="left:1823px;top:239.5px" width="12" height="12"><circle cx="6" cy="6" r="5.5" fill="#fff"/><path d="M2.1 9.9 A5.5 5.5 0 0 1 9.9 2.1" fill="none" stroke="#606060" stroke-width="1.2"/></svg><div class="t" style="left:1841.50px;top:241.34px;font-size:12px;line-height:12px;font-family:'Liberation Sans', sans-serif;font-weight:normal;color:#000;transform:scaleX(0.9500);transform-origin:0 0;">RGB</div><div class="b" style="left:1822px;top:255.7px;width:66px;height:15px;background:#f0f0f0"></div><svg class="b" style="left:1823px;top:255.7px" width="12" height="12"><circle cx="6" cy="6" r="5.5" fill="#fff"/><path d="M2.1 9.9 A5.5 5.5 0 0 1 9.9 2.1" fill="none" stroke="#606060" stroke-width="1.2"/></svg><div class="t" style="left:1841.50px;top:257.54px;font-size:12px;line-height:12px;font-family:'Liberation Sans', sans-serif;font-weight:normal;color:#000;transform:scaleX(0.9500);transform-origin:0 0;">XYZ</div><div class="b" style="left:1822px;top:271.5px;width:66px;height:15px;background:#f0f0f0"></div><svg class="b" style="left:1823px;top:271.5px" width="12" height="12"><circle cx="6" cy="6" r="5.5" fill="#fff"/><path d="M2.1 9.9 A5.5 5.5 0 0 1 9.9 2.1" fill="none" stroke="#606060" stroke-width="1.2"/></svg><div class="t" style="left:1841.50px;top:273.34px;font-size:12px;line-height:12px;font-family:'Liberation Sans', sans-serif;font-weight:normal;color:#000;transform:scaleX(0.9500);transform-origin:0 0;">xyz</div><div class="b" style="left:1822px;top:286.6px;width:66px;height:15px;background:#f0f0f0"></div><svg class="b" style="left:1823px;top:286.6px" width="12" height="12"><circle cx="6" cy="6" r="5.5" fill="#fff"/><path d="M2.1 9.9 A5.5 5.5 0 0 1 9.9 2.1" fill="none" stroke="#606060" stroke-width="1.2"/><circle cx="6" cy="6" r="2.2" fill="#000"/></svg><div class="t" style="left:1841.50px;top:288.44px;font-size:12px;line-height:12px;font-family:'Liberation Sans', sans-serif;font-weight:normal;color:#000;transform:scaleX(0.9500);transform-origin:0 0;">xyY</div><div class="b" style="left:1812px;top:306px;width:83px;height:30px;background:#ececec;box-shadow:inset -1px -1px 0 #707070, inset 1px 1px 0 #fff"></div><div class="t" style="left:1863.00px;top:317.00px;font-size:13px;line-height:13px;font-family:'Liberation Sans', sans-serif;font-weight:normal;color:#000;transform:scaleX(0.9803);transform-origin:0 0;">Go</div><div class="b" style="left:1812px;top:336px;width:83px;height:31px;background:#ececec;box-shadow:inset -1px -1px 0 #707070, inset 1px 1px 0 #fff"></div><div class="t" style="left:1851.00px;top:345.70px;font-size:13px;line-height:13px;font-family:'Liberation Sans', sans-serif;font-weight:normal;color:#000;transform:scaleX(1.0910);transform-origin:0 0;">Delete</div><div class="b" style="left:1812px;top:367px;width:83px;height:31px;background:#ececec;box-shadow:inset -1px -1px 0 #707070, inset 1px 1px 0 #fff"></div><div class="t" style="left:1858.00px;top:376.00px;font-size:13px;line-height:13px;font-family:'Liberation Sans', sans-serif;font-weight:normal;color:#000;transform:scaleX(1.0101);transform-origin:0 0;">Refs</div><svg class="b" style="left:1816px;top:308px" width="36" height="28"><defs><radialGradient id="gb0" cx="0.35" cy="0.3" r="0.75"><stop offset="0" stop-color="#fff"/><stop offset="0.25" stop-color="#eee"/><stop offset="1" stop-color="#999"/></radialGradient></defs><circle cx="13" cy="4.5" r="3.8" fill="url(#gb0)"/><defs><radialGradient id="gb1" cx="0.35" cy="0.3" r="0.75"><stop offset="0" stop-color="#fff"/><stop offset="0.25" stop-color="#eee"/><stop offset="1" stop-color="#999"/></radialGradient></defs><circle cx="7" cy="6" r="4" fill="url(#gb1)"/><defs><radialGradient id="gb2" cx="0.35" cy="0.3" r="0.75"><stop offset="0" stop-color="#fff"/><stop offset="0.25" stop-color="#ddd"/><stop offset="1" stop-color="#888"/></radialGradient></defs><circle cx="6" cy="12" r="4.5" fill="url(#gb2)"/><defs><radialGradient id="gb3" cx="0.35" cy="0.3" r="0.75"><stop offset="0" stop-color="#fff"/><stop offset="0.25" stop-color="#bbb"/><stop offset="1" stop-color="#555"/></radialGradient></defs><circle cx="13" cy="16" r="5.5" fill="url(#gb3)"/><defs><radialGradient id="gb4" cx="0.35" cy="0.3" r="0.75"><stop offset="0" stop-color="#fff"/><stop offset="0.25" stop-color="#999"/><stop offset="1" stop-color="#333"/></radialGradient></defs><circle cx="21" cy="19" r="6" fill="url(#gb4)"/><defs><radialGradient id="gb5" cx="0.35" cy="0.3" r="0.75"><stop offset="0" stop-color="#fff"/><stop offset="0.25" stop-color="#666"/><stop offset="1" stop-color="#111"/></radialGradient></defs><circle cx="28" cy="21" r="6.5" fill="url(#gb5)"/></svg><svg class="b" style="left:1818px;top:338px" width="30" height="28" viewBox="0 0 30 28"><defs><linearGradient id="rb" x1="0" y1="0" x2="1" y2="1"><stop offset="0" stop-color="#e8f6ff"/><stop offset="0.5" stop-color="#a8d8f8"/><stop offset="1" stop-color="#60a8e0"/></linearGradient></defs>
<path d="M2 4 Q15 -1 28 1 L24 24 Q14 28 6 25 Z" fill="url(#rb)" stroke="#7ab0d8" stroke-width="0.8"/>
<ellipse cx="15" cy="3" rx="13" ry="2.5" fill="#5aa0e0" opacity="0.6"/>
<path d="M12 13 A5 5 0 0 1 20 9 L21.5 7 L22 13 L16.5 12.5 L18.5 11 A3 3 0 0 0 14 13.5Z" fill="#10a020"/>
<path d="M21 15 A5 5 0 0 1 13 19 L11.5 21 L11 15 L16.5 15.5 L14.5 17 A3 3 0 0 0 19 14.5Z" fill="#10a020"/></svg><svg class="b" style="left:1818px;top:371px" width="33" height="24" viewBox="0 0 33 24">
<path d="M0 23 V10 L2 8 L5 8 L6 3 L8 2 L10 7 L12 9 L14 9 L17 4 L18 1 L21 1 L23 3 L25 8 L27 7 L29 7 L31 9 L32 9 L32 23Z" fill="#ffff00"/>
<rect x="0.5" y="11" width="2" height="12" fill="#000080"/><rect x="2.5" y="10" width="2" height="13" fill="#ff00ff"/>
<rect x="4.5" y="5" width="3" height="18" fill="#0000ff"/><rect x="7.5" y="8" width="3" height="15" fill="#00ffff"/>
<rect x="10.5" y="10" width="3" height="13" fill="#00ff00"/><rect x="13.5" y="5" width="5" height="18" fill="#ffff00"/>
<rect x="20.5" y="3" width="3" height="20" fill="#800000"/><rect x="23.5" y="9" width="8" height="14" fill="#ff0000"/></svg><div class="b" style="left:1818px;top:401px;width:56px;height:17px;background:#f4f4f4"></div><div class="b" style="left:1819px;top:403px;width:13px;height:13px;background:#fff;box-shadow:inset 1px 1px 0 #777, inset 2px 2px 0 #bbb, inset -1px -1px 0 #e8e8e8"></div><div class="t" style="left:1837.00px;top:403.00px;font-size:13px;line-height:13px;font-family:'Liberation Sans', sans-serif;font-weight:normal;color:#000;transform:scaleX(1.1160);transform-origin:0 0;">Edit</div><div class="b" style="left:388px;top:427px;width:1509px;height:591px;background:#f6f6f6"></div><div class="b" style="left:390px;top:430px;width:1505px;height:586px;background:#ececec;box-shadow:inset 0 0 0 2px #7d7d7d;"></div><div class="b" style="left:392px;top:431px;width:1501px;height:6px;background:#7d7d7d"></div><div class="b" style="left:392px;top:431px;width:1501px;height:17px;background:linear-gradient(#e3eaf4,#edf2f9);border-radius:6px 6px 0 0;"></div><div class="b" style="left:392px;top:448px;width:1501px;height:1px;background:#a3a3a3"></div><div class="t" style="left:397.50px;top:434.49px;font-size:11px;line-height:11px;font-family:'Liberation Sans', sans-serif;font-weight:bold;color:#3a3a44;transform:scaleX(1.2728);transform-origin:0 0;">Information</div><div class="b" style="left:396px;top:452px;width:302px;height:23px;background:#fff;box-shadow:inset 1px 1px 0 #6d6d6d, inset 2px 2px 0 #a0a0a0, inset -1px -1px 0 #f4f4f4"></div><div class="t" style="left:401.00px;top:458.84px;font-size:12px;line-height:12px;font-family:'Liberation Sans', sans-serif;font-weight:normal;color:#000;transform:scaleX(1.0777);transform-origin:0 0;">RGB Levels</div><div class="b" style="left:679px;top:455px;width:17px;height:17px;background:#ececec;box-shadow:inset -1px -1px 0 #707070, inset 1px 1px 0 #fff"></div><svg class="b" style="left:683px;top:461px" width="8" height="5"><path d="M0 0H7L3.5 4Z" fill="#000"/></svg><div class="b" style="left:398px;top:482px;width:1496px;height:526px;background:#f4f4f4;box-shadow:inset 2px 2px 0 #777, inset 4px 4px 0 #c8c8c8"></div><svg class="b" style="left:402px;top:486px" width="1488" height="518" viewBox="402 486 1488 518"><defs><linearGradient id="gbg" x1="0" y1="0" x2="1" y2="0"><stop offset="0" stop-color="rgb(29,29,29)"/><stop offset="1" stop-color="rgb(252,252,252)"/></linearGradient><clipPath id="gc"><rect x="402" y="486" width="1488" height="518"/></clipPath></defs><rect x="402" y="486" width="1488" height="518" fill="url(#gbg)"/><g clip-path="url(#gc)"><line x1="550.5" y1="486" x2="550.5" y2="1004" stroke="#004343" stroke-width="1"/><line x1="699.5" y1="486" x2="699.5" y2="1004" stroke="#004343" stroke-width="1"/><line x1="848.5" y1="486" x2="848.5" y2="1004" stroke="#004343" stroke-width="1"/><line x1="997.5" y1="486" x2="997.5" y2="1004" stroke="#004343" stroke-width="1"/><line x1="1146.5" y1="486" x2="1146.5" y2="1004" stroke="#004343" stroke-width="1"/><line x1="1294.5" y1="486" x2="1294.5" y2="1004" stroke="#004343" stroke-width="1"/><line x1="1443.5" y1="486" x2="1443.5" y2="1004" stroke="#004343" stroke-width="1"/><line x1="1592.5" y1="486" x2="1592.5" y2="1004" stroke="#004343" stroke-width="1"/><line x1="1741.5" y1="486" x2="1741.5" y2="1004" stroke="#004343" stroke-width="1"/><line x1="402" y1="511.5" x2="1890" y2="511.5" stroke="#004343" stroke-width="1"/><line x1="402" y1="537.5" x2="1890" y2="537.5" stroke="#004343" stroke-width="1"/><line x1="402" y1="563.5" x2="1890" y2="563.5" stroke="#004343" stroke-width="1"/><line x1="402" y1="589.5" x2="1890" y2="589.5" stroke="#004343" stroke-width="1"/><line x1="402" y1="641.5" x2="1890" y2="641.5" stroke="#004343" stroke-width="1"/><line x1="402" y1="667.5" x2="1890" y2="667.5" stroke="#004343" stroke-width="1"/><line x1="402" y1="693.5" x2="1890" y2="693.5" stroke="#004343" stroke-width="1"/><line x1="402" y1="719.5" x2="1890" y2="719.5" stroke="#004343" stroke-width="1"/><line x1="402" y1="796.5" x2="1890" y2="796.5" stroke="#004343" stroke-width="1"/><line x1="402" y1="848.5" x2="1890" y2="848.5" stroke="#004343" stroke-width="1"/><line x1="402" y1="900.5" x2="1890" y2="900.5" stroke="#004343" stroke-width="1"/><line x1="402" y1="952.5" x2="1890" y2="952.5" stroke="#004343" stroke-width="1"/><line x1="402" y1="615.5" x2="1890" y2="615.5" stroke="#004343" stroke-width="1"/><line x1="402" y1="615.5" x2="1890" y2="615.5" stroke="#fff" stroke-width="1" stroke-dasharray="3 3"/><rect x="403" y="611" width="3" height="9" fill="#f0f0f0"/></g></svg><div class="t" style="left:404.50px;top:495.69px;font-size:13.5px;line-height:13.5px;font-family:'Liberation Serif', serif;font-weight:normal;color:#e6e6e6;">140%</div><div class="t" style="left:404.50px;top:521.69px;font-size:13.5px;line-height:13.5px;font-family:'Liberation Serif', serif;font-weight:normal;color:#e6e6e6;">130%</div><div class="t" style="left:404.50px;top:547.69px;font-size:13.5px;line-height:13.5px;font-family:'Liberation Serif', serif;font-weight:normal;color:#e6e6e6;">120%</div><div class="t" style="left:404.50px;top:573.69px;font-size:13.5px;line-height:13.5px;font-family:'Liberation Serif', serif;font-weight:normal;color:#e6e6e6;">110%</div><div class="t" style="left:404.50px;top:599.69px;font-size:13.5px;line-height:13.5px;font-family:'Liberation Serif', serif;font-weight:normal;color:#e6e6e6;">100%</div><div class="t" style="left:404.50px;top:625.69px;font-size:13.5px;line-height:13.5px;font-family:'Liberation Serif', serif;font-weight:normal;color:#e6e6e6;">90%</div><div class="t" style="left:404.50px;top:651.69px;font-size:13.5px;line-height:13.5px;font-family:'Liberation Serif', serif;font-weight:normal;color:#e6e6e6;">80%</div><div class="t" style="left:404.50px;top:677.69px;font-size:13.5px;line-height:13.5px;font-family:'Liberation Serif', serif;font-weight:normal;color:#e6e6e6;">70%</div><div class="t" style="left:404.50px;top:703.69px;font-size:13.5px;line-height:13.5px;font-family:'Liberation Serif', serif;font-weight:normal;color:#e6e6e6;">60%</div><div class="t" style="left:404.50px;top:780.69px;font-size:13.5px;line-height:13.5px;font-family:'Liberation Serif', serif;font-weight:normal;color:#e6e6e6;">8</div><div class="t" style="left:404.50px;top:832.69px;font-size:13.5px;line-height:13.5px;font-family:'Liberation Serif', serif;font-weight:normal;color:#e6e6e6;">6</div><div class="t" style="left:404.50px;top:884.69px;font-size:13.5px;line-height:13.5px;font-family:'Liberation Serif', serif;font-weight:normal;color:#e6e6e6;">4</div><div class="t" style="left:404.50px;top:936.69px;font-size:13.5px;line-height:13.5px;font-family:'Liberation Serif', serif;font-weight:normal;color:#e6e6e6;">2</div><div class="t" style="left:552.00px;top:729.69px;font-size:13.5px;line-height:13.5px;font-family:'Liberation Serif', serif;font-weight:normal;color:#f0f0f0;">10% White</div><div class="t" style="left:552.00px;top:988.69px;font-size:13.5px;line-height:13.5px;font-family:'Liberation Serif', serif;font-weight:normal;color:#f0f0f0;">10% White</div><div class="t" style="left:701.00px;top:729.69px;font-size:13.5px;line-height:13.5px;font-family:'Liberation Serif', serif;font-weight:normal;color:#e8e8e8;">20% White</div><div class="t" style="left:701.00px;top:988.69px;font-size:13.5px;line-height:13.5px;font-family:'Liberation Serif', serif;font-weight:normal;color:#e8e8e8;">20% White</div><div class="t" style="left:850.00px;top:729.69px;font-size:13.5px;line-height:13.5px;font-family:'Liberation Serif', serif;font-weight:normal;color:#c8c8c8;">30% White</div><div class="t" style="left:850.00px;top:988.69px;font-size:13.5px;line-height:13.5px;font-family:'Liberation Serif', serif;font-weight:normal;color:#c8c8c8;">30% White</div><div class="t" style="left:999.00px;top:729.69px;font-size:13.5px;line-height:13.5px;font-family:'Liberation Serif', serif;font-weight:normal;color:#a8a8a8;">40% White</div><div class="t" style="left:999.00px;top:988.69px;font-size:13.5px;line-height:13.5px;font-family:'Liberation Serif', serif;font-weight:normal;color:#a8a8a8;">40% White</div><div class="t" style="left:1148.00px;top:729.69px;font-size:13.5px;line-height:13.5px;font-family:'Liberation Serif', serif;font-weight:normal;color:#7e7e7e;">50% White</div><div class="t" style="left:1148.00px;top:988.69px;font-size:13.5px;line-height:13.5px;font-family:'Liberation Serif', serif;font-weight:normal;color:#7e7e7e;">50% White</div><div class="t" style="left:1296.00px;top:729.69px;font-size:13.5px;line-height:13.5px;font-family:'Liberation Serif', serif;font-weight:normal;color:#6a6a6a;">60% White</div><div class="t" style="left:1296.00px;top:988.69px;font-size:13.5px;line-height:13.5px;font-family:'Liberation Serif', serif;font-weight:normal;color:#6a6a6a;">60% White</div><div class="t" style="left:1445.00px;top:729.69px;font-size:13.5px;line-height:13.5px;font-family:'Liberation Serif', serif;font-weight:normal;color:#555555;">70% White</div><div class="t" style="left:1445.00px;top:988.69px;font-size:13.5px;line-height:13.5px;font-family:'Liberation Serif', serif;font-weight:normal;color:#555555;">70% White</div><div class="t" style="left:1594.00px;top:729.69px;font-size:13.5px;line-height:13.5px;font-family:'Liberation Serif', serif;font-weight:normal;color:#333333;">80% White</div><div class="t" style="left:1594.00px;top:988.69px;font-size:13.5px;line-height:13.5px;font-family:'Liberation Serif', serif;font-weight:normal;color:#333333;">80% White</div><div class="t" style="left:1743.00px;top:729.69px;font-size:13.5px;line-height:13.5px;font-family:'Liberation Serif', serif;font-weight:normal;color:#1a1a1a;">90% White</div><div class="t" style="left:1743.00px;top:988.69px;font-size:13.5px;line-height:13.5px;font-family:'Liberation Serif', serif;font-weight:normal;color:#1a1a1a;">90% White</div><svg class="b" style="left:402px;top:486px" width="1488" height="518" viewBox="402 486 1488 518"><defs><clipPath id="gc2"><rect x="402" y="486" width="1488" height="518"/></clipPath></defs><g clip-path="url(#gc2)"><polyline points="551.0,510.1 700.0,544.1 850.0,576.9 999.0,591.0 1149.0,599.0 1292.0,603.3 1441.0,607.0 1591.0,610.0 1740.0,610.0 1889.0,611.0" fill="none" stroke="#ff0000" stroke-width="2" shape-rendering="crispEdges"/><rect x="547.0" y="506.1" width="8" height="8" fill="#ff0000"/><rect x="696.0" y="540.1" width="8" height="8" fill="#ff0000"/><rect x="846.0" y="572.9" width="8" height="8" fill="#ff0000"/><rect x="995.0" y="587.0" width="8" height="8" fill="#ff0000"/><rect x="1145.0" y="595.0" width="8" height="8" fill="#ff0000"/><rect x="1288.0" y="599.3" width="8" height="8" fill="#ff0000"/><rect x="1437.0" y="603.0" width="8" height="8" fill="#ff0000"/><rect x="1587.0" y="606.0" width="8" height="8" fill="#ff0000"/><rect x="1736.0" y="606.0" width="8" height="8" fill="#ff0000"/><rect x="1885.0" y="607.0" width="8" height="8" fill="#ff0000"/><polyline points="551.0,500.9 700.0,534.0 850.0,568.0 999.0,586.0 1149.0,598.4 1292.0,606.0 1441.0,609.0 1591.0,612.0 1740.0,614.0 1889.0,615.0" fill="none" stroke="#00ff00" stroke-width="2" shape-rendering="crispEdges"/><rect x="547.0" y="496.9" width="8" height="8" fill="#00ff00"/><rect x="696.0" y="530.0" width="8" height="8" fill="#00ff00"/><rect x="846.0" y="564.0" width="8" height="8" fill="#00ff00"/><rect x="995.0" y="582.0" width="8" height="8" fill="#00ff00"/><rect x="1145.0" y="594.4" width="8" height="8" fill="#00ff00"/><rect x="1288.0" y="602.0" width="8" height="8" fill="#00ff00"/><rect x="1437.0" y="605.0" width="8" height="8" fill="#00ff00"/><rect x="1587.0" y="608.0" width="8" height="8" fill="#00ff00"/><rect x="1736.0" y="610.0" width="8" height="8" fill="#00ff00"/><rect x="1885.0" y="611.0" width="8" height="8" fill="#00ff00"/><polyline points="551.0,491.9 700.0,491.9 850.0,540.2 999.0,568.8 1149.0,587.8 1292.0,599.7 1441.0,608.0 1591.0,614.0 1740.0,618.0 1889.0,621.0" fill="none" stroke="#0000ff" stroke-width="2" shape-rendering="crispEdges"/><rect x="547.0" y="487.9" width="8" height="8" fill="#0000ff"/><rect x="696.0" y="487.9" width="8" height="8" fill="#0000ff"/><rect x="846.0" y="536.2" width="8" height="8" fill="#0000ff"/><rect x="995.0" y="564.8" width="8" height="8" fill="#0000ff"/><rect x="1145.0" y="583.8" width="8" height="8" fill="#0000ff"/><rect x="1288.0" y="595.7" width="8" height="8" fill="#0000ff"/><rect x="1437.0" y="604.0" width="8" height="8" fill="#0000ff"/><rect x="1587.0" y="610.0" width="8" height="8" fill="#0000ff"/><rect x="1736.0" y="614.0" width="8" height="8" fill="#0000ff"/><rect x="1885.0" y="617.0" width="8" height="8" fill="#0000ff"/><polyline points="551.0,977.5 700.0,928.5 850.0,930.5 999.0,940.0 1149.0,953.0 1292.0,971.0 1441.0,985.0 1591.0,991.0 1740.0,977.5 1889.0,970.0" fill="none" stroke="#ff00ff" stroke-width="2" shape-rendering="crispEdges"/><rect x="547.0" y="973.5" width="8" height="8" fill="#ff00ff"/><rect x="696.0" y="924.5" width="8" height="8" fill="#ff00ff"/><rect x="846.0" y="926.5" width="8" height="8" fill="#ff00ff"/><rect x="995.0" y="936.0" width="8" height="8" fill="#ff00ff"/><rect x="1145.0" y="949.0" width="8" height="8" fill="#ff00ff"/><rect x="1288.0" y="967.0" width="8" height="8" fill="#ff00ff"/><rect x="1437.0" y="981.0" width="8" height="8" fill="#ff00ff"/><rect x="1587.0" y="987.0" width="8" height="8" fill="#ff00ff"/><rect x="1736.0" y="973.5" width="8" height="8" fill="#ff00ff"/><rect x="1885.0" y="966.0" width="8" height="8" fill="#ff00ff"/></g></svg><div class="t" style="left:1055.50px;top:488.03px;font-size:14.5px;line-height:14.5px;font-family:'Liberation Sans', sans-serif;font-weight:bold;color:#dcdc1e;">Gray Scale Balance w/gamma</div><div class="t" style="left:1725.00px;top:949.26px;font-size:16px;line-height:16px;font-family:'Liberation Sans', sans-serif;font-weight:bold;color:#9a9a9a;transform:scaleX(1.0051);transform-origin:0 0;">hcfr.sourceforge.net</div><div class="b" style="left:3px;top:427px;width:382px;height:591px;background:#f6f6f6"></div><div class="b" style="left:5px;top:430px;width:378px;height:586px;background:#ececec;box-shadow:inset 0 0 0 2px #7d7d7d;"></div><div class="b" style="left:7px;top:431px;width:374px;height:6px;background:#7d7d7d"></div><div class="b" style="left:7px;top:431px;width:374px;height:17px;background:linear-gradient(#e3eaf4,#edf2f9);border-radius:6px 6px 0 0;"></div><div class="b" style="left:7px;top:448px;width:374px;height:1px;background:#a3a3a3"></div><div class="t" style="left:12.50px;top:434.49px;font-size:11px;line-height:11px;font-family:'Liberation Sans', sans-serif;font-weight:bold;color:#3a3a44;transform:scaleX(1.2261);transform-origin:0 0;">Selected color</div><div class="b" style="left:14px;top:451px;width:113px;height:16px;background:#f0f0f0"></div><div class="t" style="left:18.00px;top:453.84px;font-size:12px;line-height:12px;font-family:'Liberation Sans', sans-serif;font-weight:normal;color:#000;transform:scaleX(1.0777);transform-origin:0 0;">RGB Levels</div><div class="b" style="left:229px;top:450px;width:128px;height:15px;background:#f0f0f0"></div><div class="t" style="left:241.00px;top:451.84px;font-size:12px;line-height:12px;font-family:'Liberation Sans', sans-serif;font-weight:normal;color:#000;transform:scaleX(1.1773);transform-origin:0 0;">Current Measure</div><div class="b" style="left:14px;top:476px;width:200px;height:90px;background:#efefef"></div><div class="b" style="left:14px;top:520px;width:200px;height:1px;background:repeating-linear-gradient(90deg,#707070 0 3px,transparent 3px 5px)"></div><div class="t" style="left:26.40px;top:538.97px;font-size:11.5px;line-height:11.5px;font-family:'Liberation Serif', serif;font-weight:normal;color:#000;transform:scaleX(1.0269);transform-origin:0 0;">0.0%</div><div class="t" style="left:77.20px;top:538.97px;font-size:11.5px;line-height:11.5px;font-family:'Liberation Serif', serif;font-weight:normal;color:#000;transform:scaleX(1.0269);transform-origin:0 0;">0.0%</div><div class="t" style="left:128.00px;top:538.97px;font-size:11.5px;line-height:11.5px;font-family:'Liberation Serif', serif;font-weight:normal;color:#000;transform:scaleX(1.0269);transform-origin:0 0;">0.0%</div><div class="t" style="left:175.30px;top:538.97px;font-size:11.5px;line-height:11.5px;font-family:'Liberation Serif', serif;font-weight:normal;color:#000;transform:scaleX(1.1124);transform-origin:0 0;">dE 0.0</div><svg class="b" style="left:14px;top:550px" width="200" height="12" viewBox="0 0 200 12"><path d="M0 8 C10 1.5 40 1.5 50 8 Z" fill="#a00000" stroke="#000" stroke-width="1.4"/><path d="M51 8 C61 1.5 91 1.5 101 8 Z" fill="#00a000" stroke="#000" stroke-width="1.4"/><path d="M102 8 C112 1.5 142 1.5 152 8 Z" fill="#0000a0" stroke="#000" stroke-width="1.4"/><path d="M153 8 C163 1.5 189 1.5 199 8 Z" fill="#b8860b" stroke="#000" stroke-width="1.4"/><rect x="0" y="7" width="200" height="5" fill="#000"/></svg><div class="b" style="left:16px;top:575px;width:192px;height:74px;background:#f0f0f0"></div><div class="t" style="left:35.50px;top:578.42px;font-size:12.5px;line-height:12.5px;font-family:'Liberation Sans', sans-serif;font-weight:bold;color:#000;transform:scaleX(1.1041);transform-origin:0 0;">Measure</div><div class="t" style="left:127.00px;top:578.42px;font-size:12.5px;line-height:12.5px;font-family:'Liberation Sans', sans-serif;font-weight:bold;color:#000;transform:scaleX(1.0752);transform-origin:0 0;">Reference</div><div class="b" style="left:16px;top:664px;width:44px;height:16px;background:#f0f0f0"></div><div class="t" style="left:18.00px;top:666.84px;font-size:12px;line-height:12px;font-family:'Liberation Sans', sans-serif;font-weight:normal;color:#000;transform:scaleX(1.1993);transform-origin:0 0;">Target</div><svg class="b" style="left:50px;top:681px" width="116" height="89" viewBox="0 0 116 89">
<defs>
<linearGradient id="tg1" x1="0" y1="0" x2="1" y2="0"><stop offset="0" stop-color="#00ff80"/><stop offset="0.5" stop-color="#40ff00"/><stop offset="1" stop-color="#ffc000"/></linearGradient>
<linearGradient id="tg2" x1="0" y1="0" x2="1" y2="0"><stop offset="0" stop-color="#0000ff"/><stop offset="0.5" stop-color="#8000c0"/><stop offset="1" stop-color="#ff0090"/></linearGradient>
<linearGradient id="tg3" x1="0" y1="0" x2="0" y2="1"><stop offset="0" stop-color="#00ff80"/><stop offset="0.5" stop-color="#00c0c0"/><stop offset="1" stop-color="#0000ff"/></linearGradient>
<linearGradient id="tg4" x1="0" y1="0" x2="0" y2="1"><stop offset="0" stop-color="#ffc000"/><stop offset="0.5" stop-color="#ff0000"/><stop offset="1" stop-color="#ff0090"/></linearGradient>
</defs>
<rect x="0" y="0" width="116" height="89" fill="#808080"/>
<path d="M0 0 H116 L58 44Z" fill="url(#tg1)"/>
<path d="M0 89 H116 L58 44Z" fill="url(#tg2)"/>
<path d="M0 0 V89 L58 44Z" fill="url(#tg3)"/>
<path d="M116 0 V89 L58 44Z" fill="url(#tg4)"/>
<rect x="0.5" y="0.5" width="115" height="88" fill="none" stroke="#000"/>
<rect x="17" y="13" width="82" height="63" rx="10" fill="#000" stroke="#fff" stroke-width="1"/>
<path d="M15 44 H101 M58 11 V78" stroke="#fff" stroke-width="1" stroke-dasharray="3 2"/>
<ellipse cx="58" cy="44" rx="21" ry="15" fill="none" stroke="#fff" stroke-width="1" stroke-dasharray="3 2"/>
</svg><div class="b" style="left:221px;top:473px;width:151px;height:534px;background:#f0f0f0;box-shadow:inset 1px 1px 0 #6a6a6a, inset 2px 2px 0 #a8a8a8"></div><div class="b" style="left:223px;top:475px;width:55px;height:23px;background:#efefef;box-shadow:inset -2px -1px 0 #6e6e6e, inset 1px 1px 0 #fff"></div><div class="b" style="left:278px;top:475px;width:77px;height:23px;background:#fff;box-shadow:inset 0 -1px 0 #c4c4c4"></div><div class="t" style="left:229.95px;top:481.34px;font-size:12px;line-height:12px;font-family:'Liberation Sans', sans-serif;font-weight:bold;color:#000;transform:scaleX(0.9300);transform-origin:0 0;">Y cd/m²</div><div class="b" style="left:223px;top:498px;width:55px;height:23px;background:#efefef;box-shadow:inset -2px -1px 0 #6e6e6e, inset 1px 1px 0 #fff"></div><div class="b" style="left:278px;top:498px;width:77px;height:23px;background:#fff;box-shadow:inset 0 -1px 0 #c4c4c4"></div><div class="t" style="left:237.70px;top:504.37px;font-size:12px;line-height:12px;font-family:'Liberation Sans', sans-serif;font-weight:bold;color:#000;transform:scaleX(0.9300);transform-origin:0 0;">Y ftL</div><div class="b" style="left:223px;top:521px;width:55px;height:23px;background:#efefef;box-shadow:inset -2px -1px 0 #6e6e6e, inset 1px 1px 0 #fff"></div><div class="b" style="left:278px;top:521px;width:77px;height:23px;background:#fff;box-shadow:inset 0 -1px 0 #c4c4c4"></div><div class="t" style="left:244.36px;top:527.40px;font-size:12px;line-height:12px;font-family:'Liberation Sans', sans-serif;font-weight:bold;color:#000;transform:scaleX(0.9300);transform-origin:0 0;">T°</div><div class="b" style="left:223px;top:544px;width:55px;height:23px;background:#efefef;box-shadow:inset -2px -1px 0 #6e6e6e, inset 1px 1px 0 #fff"></div><div class="b" style="left:278px;top:544px;width:77px;height:23px;background:#dcdcdc;box-shadow:inset 0 -1px 0 #c4c4c4"></div><div class="t" style="left:246.28px;top:550.43px;font-size:12px;line-height:12px;font-family:'Liberation Sans', sans-serif;font-weight:bold;color:#000;transform:scaleX(0.9300);transform-origin:0 0;">X</div><div class="b" style="left:223px;top:567px;width:55px;height:23px;background:#efefef;box-shadow:inset -2px -1px 0 #6e6e6e, inset 1px 1px 0 #fff"></div><div class="b" style="left:278px;top:567px;width:77px;height:23px;background:#dcdcdc;box-shadow:inset 0 -1px 0 #c4c4c4"></div><div class="t" style="left:246.28px;top:573.46px;font-size:12px;line-height:12px;font-family:'Liberation Sans', sans-serif;font-weight:bold;color:#000;transform:scaleX(0.9300);transform-origin:0 0;">Y</div><div class="b" style="left:223px;top:590px;width:55px;height:23px;background:#efefef;box-shadow:inset -2px -1px 0 #6e6e6e, inset 1px 1px 0 #fff"></div><div class="b" style="left:278px;top:590px;width:77px;height:23px;background:#dcdcdc;box-shadow:inset 0 -1px 0 #c4c4c4"></div><div class="t" style="left:246.59px;top:596.49px;font-size:12px;line-height:12px;font-family:'Liberation Sans', sans-serif;font-weight:bold;color:#000;transform:scaleX(0.9300);transform-origin:0 0;">Z</div><div class="b" style="left:223px;top:613px;width:55px;height:23px;background:#efefef;box-shadow:inset -2px -1px 0 #6e6e6e, inset 1px 1px 0 #fff"></div><div class="b" style="left:278px;top:613px;width:77px;height:23px;background:#fff;box-shadow:inset 0 -1px 0 #c4c4c4"></div><div class="t" style="left:245.97px;top:619.52px;font-size:12px;line-height:12px;font-family:'Liberation Sans', sans-serif;font-weight:bold;color:#000;transform:scaleX(0.9300);transform-origin:0 0;">R</div><div class="b" style="left:223px;top:636px;width:55px;height:23px;background:#efefef;box-shadow:inset -2px -1px 0 #6e6e6e, inset 1px 1px 0 #fff"></div><div class="b" style="left:278px;top:636px;width:77px;height:23px;background:#fff;box-shadow:inset 0 -1px 0 #c4c4c4"></div><div class="t" style="left:245.66px;top:642.55px;font-size:12px;line-height:12px;font-family:'Liberation Sans', sans-serif;font-weight:bold;color:#000;transform:scaleX(0.9300);transform-origin:0 0;">G</div><div class="b" style="left:223px;top:659px;width:55px;height:23px;background:#efefef;box-shadow:inset -2px -1px 0 #6e6e6e, inset 1px 1px 0 #fff"></div><div class="b" style="left:278px;top:659px;width:77px;height:23px;background:#fff;box-shadow:inset 0 -1px 0 #c4c4c4"></div><div class="t" style="left:245.97px;top:665.58px;font-size:12px;line-height:12px;font-family:'Liberation Sans', sans-serif;font-weight:bold;color:#000;transform:scaleX(0.9300);transform-origin:0 0;">B</div><div class="b" style="left:223px;top:682px;width:55px;height:23px;background:#efefef;box-shadow:inset -2px -1px 0 #6e6e6e, inset 1px 1px 0 #fff"></div><div class="b" style="left:278px;top:682px;width:77px;height:23px;background:#dcdcdc;box-shadow:inset 0 -1px 0 #c4c4c4"></div><div class="t" style="left:246.90px;top:688.61px;font-size:12px;line-height:12px;font-family:'Liberation Sans', sans-serif;font-weight:bold;color:#000;transform:scaleX(0.9300);transform-origin:0 0;">x</div><div class="b" style="left:223px;top:705px;width:55px;height:23px;background:#efefef;box-shadow:inset -2px -1px 0 #6e6e6e, inset 1px 1px 0 #fff"></div><div class="b" style="left:278px;top:705px;width:77px;height:23px;background:#dcdcdc;box-shadow:inset 0 -1px 0 #c4c4c4"></div><div class="t" style="left:246.90px;top:711.64px;font-size:12px;line-height:12px;font-family:'Liberation Sans', sans-serif;font-weight:bold;color:#000;transform:scaleX(0.9300);transform-origin:0 0;">y</div><div class="b" style="left:223px;top:728px;width:55px;height:23px;background:#efefef;box-shadow:inset -2px -1px 0 #6e6e6e, inset 1px 1px 0 #fff"></div><div class="b" style="left:278px;top:728px;width:77px;height:23px;background:#dcdcdc;box-shadow:inset 0 -1px 0 #c4c4c4"></div><div class="t" style="left:246.28px;top:734.67px;font-size:12px;line-height:12px;font-family:'Liberation Sans', sans-serif;font-weight:bold;color:#000;transform:scaleX(0.9300);transform-origin:0 0;">Y</div><div class="b" style="left:223px;top:751px;width:55px;height:23px;background:#efefef;box-shadow:inset -2px -1px 0 #6e6e6e, inset 1px 1px 0 #fff"></div><div class="b" style="left:278px;top:751px;width:77px;height:23px;background:#fff;box-shadow:inset 0 -1px 0 #c4c4c4"></div><div class="t" style="left:246.90px;top:757.70px;font-size:12px;line-height:12px;font-family:'Liberation Sans', sans-serif;font-weight:bold;color:#000;transform:scaleX(0.9300);transform-origin:0 0;">x</div><div class="b" style="left:223px;top:774px;width:55px;height:23px;background:#efefef;box-shadow:inset -2px -1px 0 #6e6e6e, inset 1px 1px 0 #fff"></div><div class="b" style="left:278px;top:774px;width:77px;height:23px;background:#fff;box-shadow:inset 0 -1px 0 #c4c4c4"></div><div class="t" style="left:246.90px;top:780.73px;font-size:12px;line-height:12px;font-family:'Liberation Sans', sans-serif;font-weight:bold;color:#000;transform:scaleX(0.9300);transform-origin:0 0;">y</div><div class="b" style="left:223px;top:797px;width:55px;height:23px;background:#efefef;box-shadow:inset -2px -1px 0 #6e6e6e, inset 1px 1px 0 #fff"></div><div class="b" style="left:278px;top:797px;width:77px;height:23px;background:#fff;box-shadow:inset 0 -1px 0 #c4c4c4"></div><div class="t" style="left:247.21px;top:803.76px;font-size:12px;line-height:12px;font-family:'Liberation Sans', sans-serif;font-weight:bold;color:#000;transform:scaleX(0.9300);transform-origin:0 0;">z</div><div class="b" style="left:223px;top:820px;width:55px;height:23px;background:#efefef;box-shadow:inset -2px -1px 0 #6e6e6e, inset 1px 1px 0 #fff"></div><div class="b" style="left:278px;top:820px;width:77px;height:23px;background:#dcdcdc;box-shadow:inset 0 -1px 0 #c4c4c4"></div><div class="t" style="left:246.59px;top:826.79px;font-size:12px;line-height:12px;font-family:'Liberation Sans', sans-serif;font-weight:bold;color:#000;transform:scaleX(0.9300);transform-origin:0 0;">L</div><div class="b" style="left:223px;top:843px;width:55px;height:24px;background:#efefef;box-shadow:inset -2px -1px 0 #6e6e6e, inset 1px 1px 0 #fff"></div><div class="b" style="left:278px;top:843px;width:77px;height:24px;background:#dcdcdc;box-shadow:inset 0 -1px 0 #c4c4c4"></div><div class="t" style="left:246.90px;top:849.82px;font-size:12px;line-height:12px;font-family:'Liberation Sans', sans-serif;font-weight:bold;color:#000;transform:scaleX(0.9300);transform-origin:0 0;">a</div><div class="b" style="left:223px;top:867px;width:55px;height:23px;background:#efefef;box-shadow:inset -2px -1px 0 #6e6e6e, inset 1px 1px 0 #fff"></div><div class="b" style="left:278px;top:867px;width:77px;height:23px;background:#dcdcdc;box-shadow:inset 0 -1px 0 #c4c4c4"></div><div class="t" style="left:246.59px;top:872.85px;font-size:12px;line-height:12px;font-family:'Liberation Sans', sans-serif;font-weight:bold;color:#000;transform:scaleX(0.9300);transform-origin:0 0;">b</div><div class="b" style="left:223px;top:890px;width:55px;height:23px;background:#efefef;box-shadow:inset -2px -1px 0 #6e6e6e, inset 1px 1px 0 #fff"></div><div class="b" style="left:278px;top:890px;width:77px;height:23px;background:#fff;box-shadow:inset 0 -1px 0 #c4c4c4"></div><div class="t" style="left:246.59px;top:895.88px;font-size:12px;line-height:12px;font-family:'Liberation Sans', sans-serif;font-weight:bold;color:#000;transform:scaleX(0.9300);transform-origin:0 0;">L</div><div class="b" style="left:223px;top:913px;width:55px;height:23px;background:#efefef;box-shadow:inset -2px -1px 0 #6e6e6e, inset 1px 1px 0 #fff"></div><div class="b" style="left:278px;top:913px;width:77px;height:23px;background:#fff;box-shadow:inset 0 -1px 0 #c4c4c4"></div><div class="t" style="left:245.97px;top:918.91px;font-size:12px;line-height:12px;font-family:'Liberation Sans', sans-serif;font-weight:bold;color:#000;transform:scaleX(0.9300);transform-origin:0 0;">C</div><div class="b" style="left:223px;top:936px;width:55px;height:23px;background:#efefef;box-shadow:inset -2px -1px 0 #6e6e6e, inset 1px 1px 0 #fff"></div><div class="b" style="left:278px;top:936px;width:77px;height:23px;background:#fff;box-shadow:inset 0 -1px 0 #c4c4c4"></div><div class="t" style="left:245.97px;top:941.94px;font-size:12px;line-height:12px;font-family:'Liberation Sans', sans-serif;font-weight:bold;color:#000;transform:scaleX(0.9300);transform-origin:0 0;">H</div><div class="b" style="left:223px;top:959px;width:55px;height:23px;background:#efefef;box-shadow:inset -2px -1px 0 #6e6e6e, inset 1px 1px 0 #fff"></div><div class="b" style="left:278px;top:959px;width:77px;height:23px;background:#dcdcdc;box-shadow:inset 0 -1px 0 #c4c4c4"></div><div class="t" style="left:246.59px;top:964.97px;font-size:12px;line-height:12px;font-family:'Liberation Sans', sans-serif;font-weight:bold;color:#000;transform:scaleX(0.9300);transform-origin:0 0;">L</div><div class="b" style="left:223px;top:982px;width:55px;height:23px;background:#efefef;box-shadow:inset -2px -1px 0 #6e6e6e, inset 1px 1px 0 #fff"></div><div class="b" style="left:278px;top:982px;width:77px;height:23px;background:#dcdcdc;box-shadow:inset 0 -1px 0 #c4c4c4"></div><div class="t" style="left:245.35px;top:988.00px;font-size:12px;line-height:12px;font-family:'Liberation Sans', sans-serif;font-weight:bold;color:#000;transform:scaleX(0.9300);transform-origin:0 0;">M</div><div class="b" style="left:355px;top:474px;width:17px;height:532px;background:#f0f0f0"></div><div class="b" style="left:357px;top:490px;width:13px;height:481px;background:#cdcdcd"></div><svg class="b" style="left:358px;top:480px" width="10" height="8"><path d="M1 6 L5 2 L9 6" fill="none" stroke="#505050" stroke-width="1.8"/></svg><svg class="b" style="left:358px;top:993px" width="10" height="8"><path d="M1 2 L5 6 L9 2" fill="none" stroke="#505050" stroke-width="1.8"/></svg><div class="b" style="left:1901px;top:133px;width:19px;height:906px;background:#f0f0f0"></div><div class="b" style="left:1902px;top:152px;width:15px;height:827px;background:#cdcdcd"></div><svg class="b" style="left:1905px;top:140px" width="10" height="8"><path d="M1 6 L5 2 L9 6" fill="none" stroke="#555" stroke-width="1.8"/></svg><svg class="b" style="left:1905px;top:1009px" width="10" height="8"><path d="M1 2 L5 6 L9 2" fill="none" stroke="#555" stroke-width="1.8"/></svg><div class="b" style="left:0px;top:1017px;width:1901px;height:2px;background:#6a6a6a"></div><div class="b" style="left:0px;top:1019px;width:1901px;height:2px;background:#b8b8b8"></div><div class="b" style="left:0px;top:1021px;width:1901px;height:2px;background:#fafafa"></div><div class="b" style="left:0px;top:1022px;width:1901px;height:16px;background:#f0f0f0"></div><div class="b" style="left:0px;top:1015px;width:2px;height:23px;background:#707070"></div><div class="b" style="left:19px;top:1023px;width:1825px;height:15px;background:#cdcdcd"></div><svg class="b" style="left:6px;top:1026px" width="8" height="10"><path d="M6 1 L2 5 L6 9" fill="none" stroke="#555" stroke-width="1.8"/></svg><svg class="b" style="left:1889px;top:1026px" width="8" height="10"><path d="M2 1 L6 5 L2 9" fill="none" stroke="#555" stroke-width="1.8"/></svg><div class="b" style="left:0px;top:1038px;width:1920px;height:2px;background:#e8e8e8"></div><div class="b" style="left:0px;top:1040px;width:1920px;height:2px;background:#fff"></div><div class="b" style="left:0px;top:1042px;width:1920px;height:19px;background:#f0f0f0"></div><div class="b" style="left:0px;top:1042px;width:1920px;height:1px;background:#000"></div><div class="b" style="left:0px;top:1042px;width:54px;height:19px;background:#000"></div><div class="b" style="left:1px;top:1043px;width:17px;height:17px;background:#ececec;box-shadow:inset -1px -1px 0 #808080, inset 1px 1px 0 #fff"></div><div class="b" style="left:18px;top:1043px;width:17px;height:17px;background:#ececec;box-shadow:inset -1px -1px 0 #808080, inset 1px 1px 0 #fff"></div><div class="b" style="left:35px;top:1043px;width:17px;height:17px;background:#ececec;box-shadow:inset -1px -1px 0 #808080, inset 1px 1px 0 #fff"></div><svg class="b" style="left:5px;top:1047px" width="10" height="9"><path d="M1 0.5 L8.5 8 M8.5 0.5 L1 8" stroke="#000" stroke-width="1.6"/></svg><svg class="b" style="left:23px;top:1047px" width="6" height="9"><path d="M5 0 L0.5 4.5 L5 9Z" fill="#000"/></svg><svg class="b" style="left:41px;top:1047px" width="6" height="9"><path d="M0.5 0 L5 4.5 L0.5 9Z" fill="#000"/></svg><svg class="b" style="left:54px;top:1042px" width="310" height="19" viewBox="54 1042 310 19">
<path d="M119 1042.5 L127 1060.5 L187 1060.5 L195 1042.5" fill="#f0f0f0" stroke="#000" stroke-width="1"/>
<path d="M187 1042.5 L195 1060.5 L240 1060.5 L248 1042.5" fill="#f0f0f0" stroke="#000" stroke-width="1"/>
<path d="M240 1042.5 L248 1060.5 L344 1060.5 L352 1042.5" fill="#f0f0f0" stroke="#000" stroke-width="1"/>
<path d="M54.5 1042.5 L63 1060.5 L119.5 1060.5 L127.5 1042.5Z" fill="#fff" stroke="none"/>
<path d="M54.5 1042.5 L63 1060.5 L119.5 1060.5 L127.5 1042.5" fill="none" stroke="#000" stroke-width="1"/>
</svg><div class="t" style="left:66.50px;top:1046.69px;font-size:11px;line-height:11px;font-family:'Liberation Sans', sans-serif;font-weight:bold;color:#000;transform:scaleX(0.9753);transform-origin:0 0;">Measures</div><div class="t" style="left:134.00px;top:1047.11px;font-size:10.5px;line-height:10.5px;font-family:'Liberation Sans', sans-serif;font-weight:normal;color:#000;transform:scaleX(0.8760);transform-origin:0 0;">Luminance</div><div class="t" style="left:200.00px;top:1047.11px;font-size:10.5px;line-height:10.5px;font-family:'Liberation Sans', sans-serif;font-weight:normal;color:#000;transform:scaleX(0.8838);transform-origin:0 0;">Gamma</div><div class="t" style="left:258.00px;top:1047.11px;font-size:10.5px;line-height:10.5px;font-family:'Liberation Sans', sans-serif;font-weight:normal;color:#000;transform:scaleX(0.8745);transform-origin:0 0;">Color temperature</div><svg class="b" style="left:1751px;top:1044px" width="15" height="15"><path d="M1 1 H13 V10 L11 14 H9 L8 11 H6 L5 14 H3 L1 10Z" fill="#8a8a00" stroke="#000" stroke-width="1"/><rect x="3" y="3" width="7" height="5" fill="#fff"/><path d="M4 5 H9 V7" fill="none" stroke="#e00000" stroke-width="1.6"/><path d="M8 10 H13 L12 14 H9Z" fill="#ffff20" stroke="#000" stroke-width="0.8"/></svg><div class="b" style="left:1846px;top:1044px;width:12px;height:12px;background:#fff;box-shadow:inset 0 0 0 1px #555"></div><div class="t" style="left:1865.00px;top:1045.27px;font-size:11.5px;line-height:11.5px;font-family:'Liberation Sans', sans-serif;font-weight:normal;color:#000;transform:scaleX(0.9423);transform-origin:0 0;">Reference</div><div class="b" style="left:0px;top:1061px;width:1920px;height:16px;background:#e8eef6"></div><div class="b" style="left:0px;top:1077px;width:1920px;height:1px;background:#f4f8fc"></div><div class="t" style="left:2.50px;top:1064.84px;font-size:12px;line-height:12px;font-family:'Liberation Sans', sans-serif;font-weight:normal;color:#000;transform:scaleX(0.9081);transform-origin:0 0;">Ready</div><div class="b" style="left:1743px;top:1062px;width:74px;height:16px;box-shadow:inset 1px 1px 0 #a8bcd8"></div><div class="b" style="left:1820px;top:1062px;width:28px;height:16px;box-shadow:inset 1px 1px 0 #a8bcd8"></div><div class="b" style="left:1851px;top:1062px;width:33px;height:16px;box-shadow:inset 1px 1px 0 #a8bcd8"></div><div class="b" style="left:1887px;top:1062px;width:33px;height:16px;box-shadow:inset 1px 1px 0 #a8bcd8"></div><div class="t" style="left:1823.00px;top:1064.84px;font-size:12px;line-height:12px;font-family:'Liberation Sans', sans-serif;font-weight:normal;color:#000;transform:scaleX(0.9119);transform-origin:0 0;">CAP</div><div class="t" style="left:1854.00px;top:1064.84px;font-size:12px;line-height:12px;font-family:'Liberation Sans', sans-serif;font-weight:normal;color:#000;transform:scaleX(0.9880);transform-origin:0 0;">NUM</div><div class="b" style="left:0px;top:1078px;width:1920px;height:2px;background:#2a2a2a"></div>
</body></html>
